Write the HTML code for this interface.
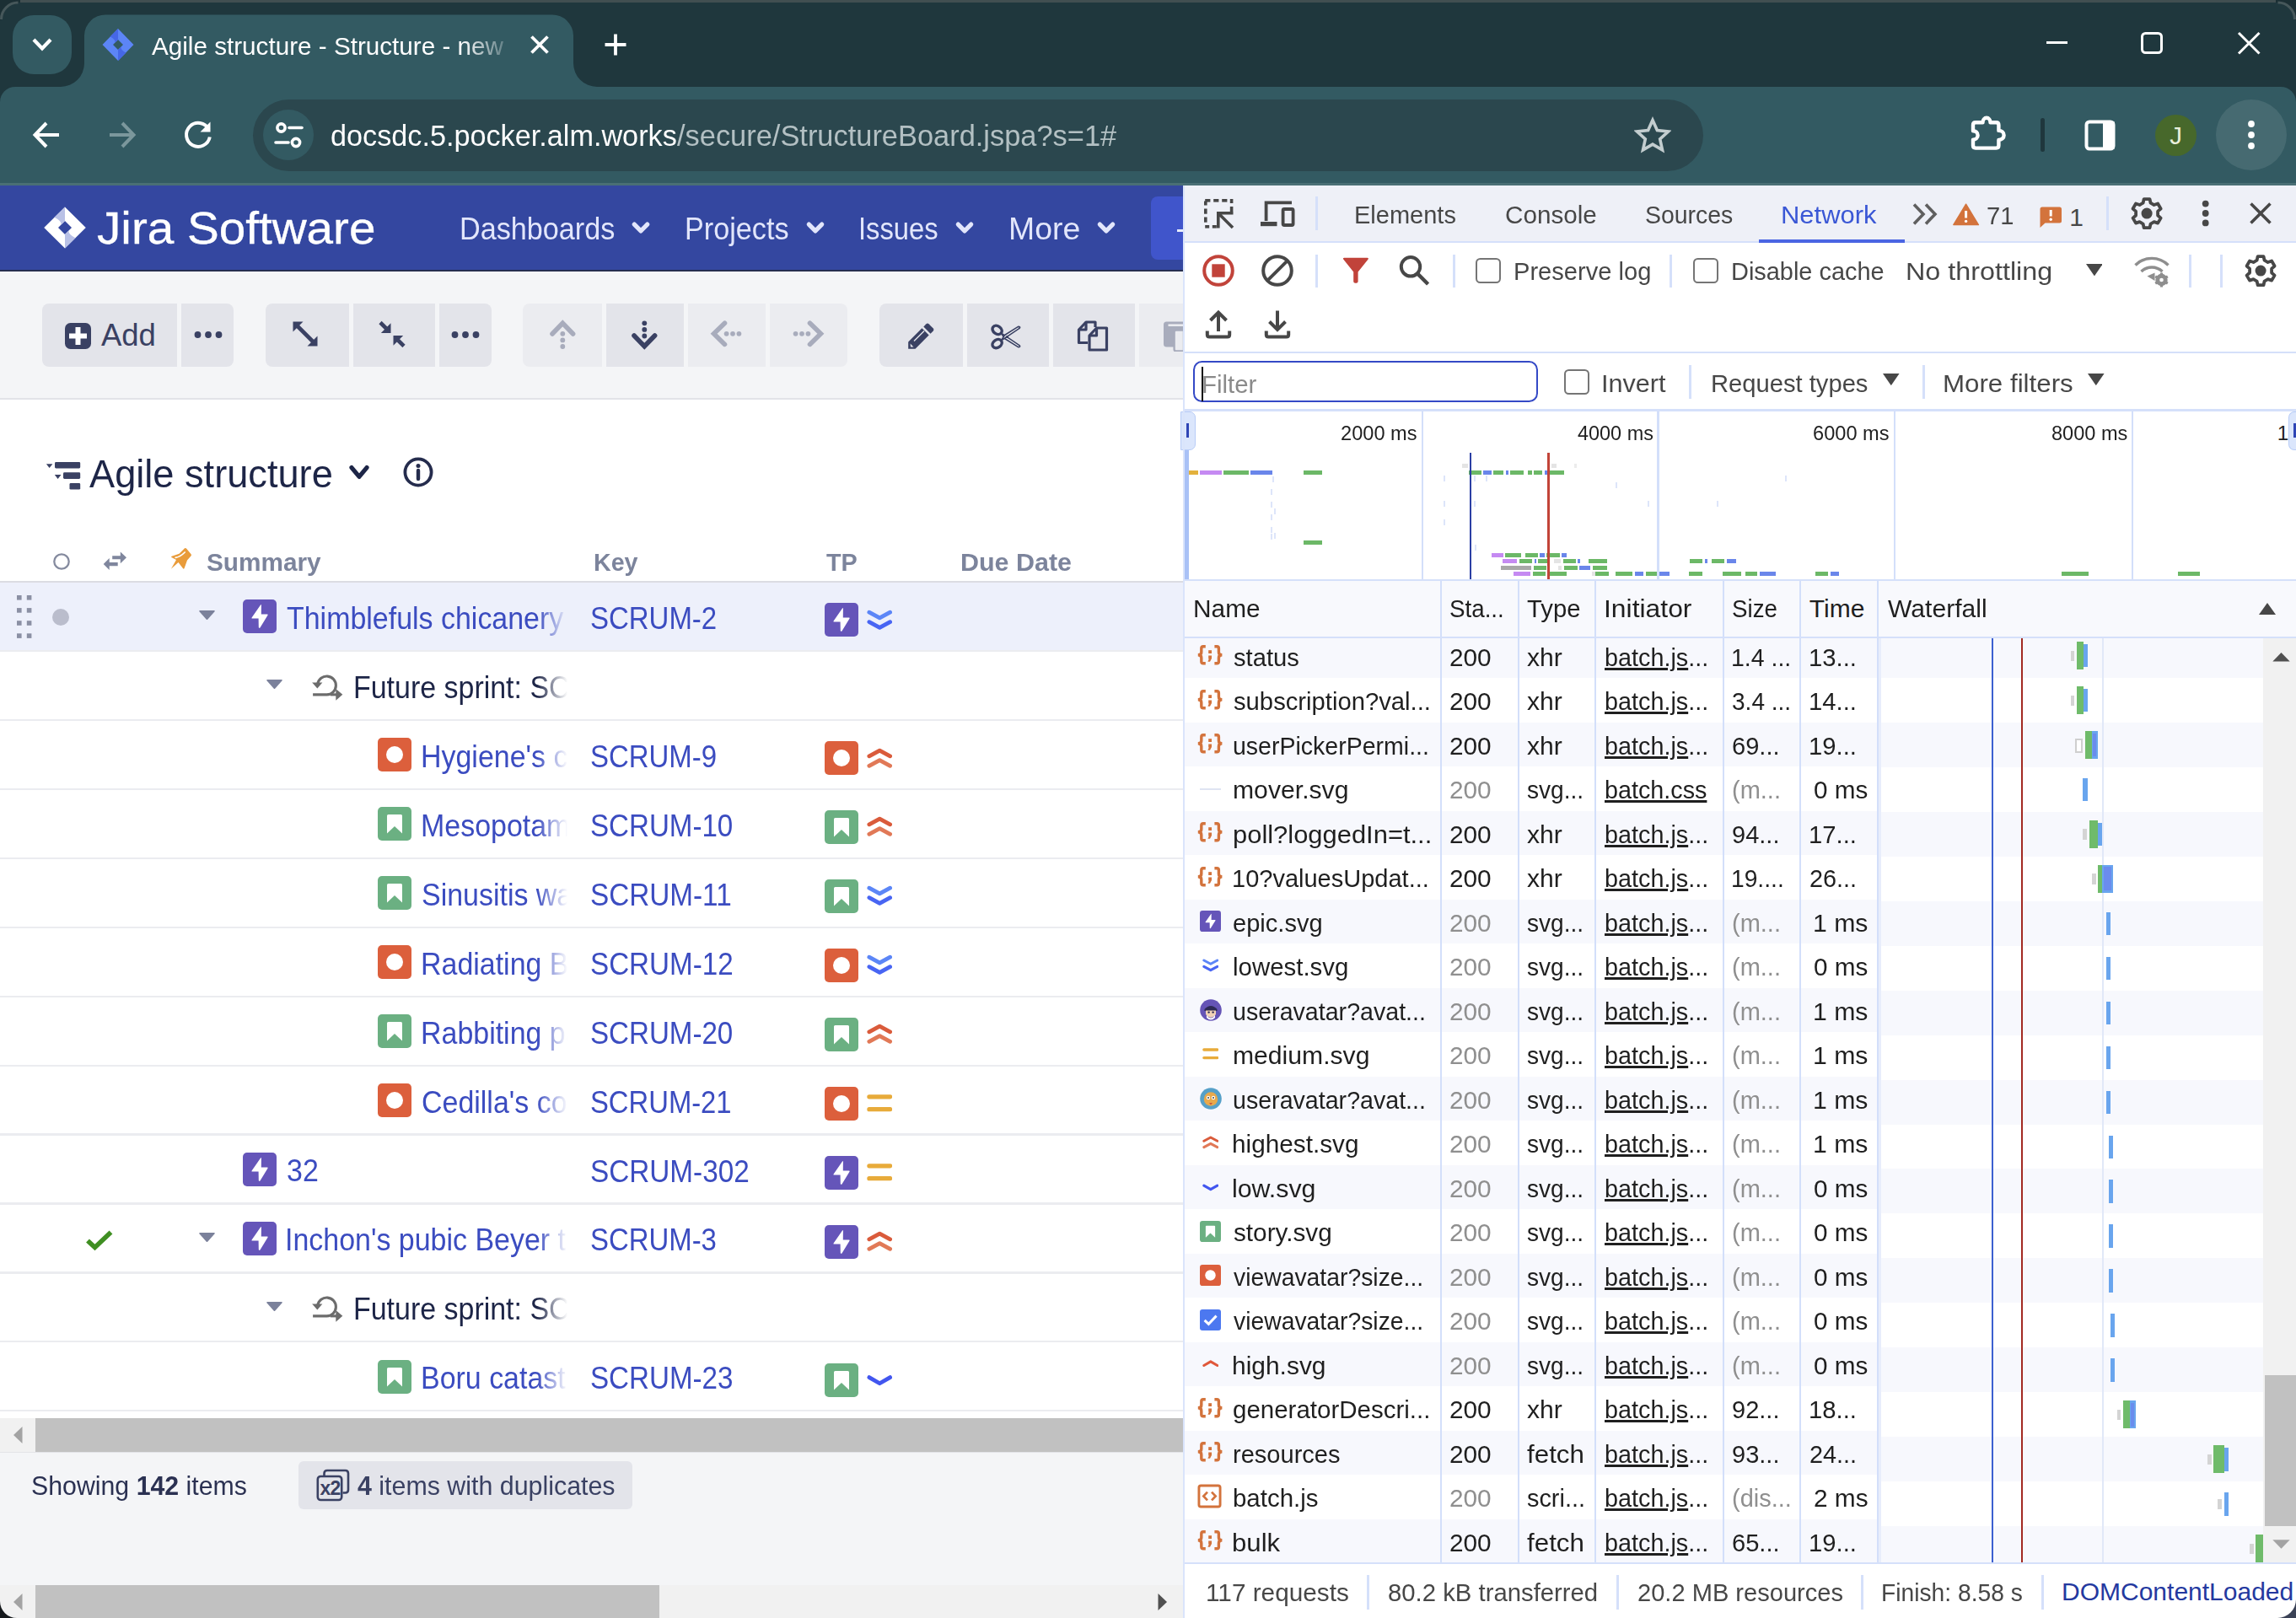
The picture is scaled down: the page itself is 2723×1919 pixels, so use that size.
<!DOCTYPE html>
<html lang="en"><head><meta charset="utf-8"><title>Agile structure - Structure - new</title>
<style>
html,body{margin:0;padding:0;}
html{width:2723px;height:1919px;overflow:hidden;}
body{width:2723px;height:1919px;overflow:hidden;position:relative;background:#fff;font-family:"Liberation Sans", sans-serif;}
.b{position:absolute;display:block;box-sizing:border-box;}
.t{position:absolute;display:block;white-space:nowrap;line-height:1;font-family:"Liberation Sans", sans-serif;transform-origin:0 0;}
.c{position:absolute;overflow:hidden;}

</style></head><body>
<div class="b" style="left:0px;top:0px;width:2723px;height:130px;background:#1f373d;"></div>
<div class="b" style="left:0px;top:0px;width:2723px;height:3px;background:#414f51;"></div>
<div class="b" style="left:0px;top:103px;width:2723px;height:117px;background:#335a62;border-radius:18px 18px 0 0;"></div>
<div class="b" style="left:0px;top:217.2px;width:2723px;height:2.4px;background:#4a6f75;"></div>
<svg class="b" style="left:0px;top:0px;" width="24" height="24" viewBox="0 0 24 24"><path d="M0 0 H24 V3 H20 A18.5 18.5 0 0 0 1.5 21.5 V24 H0 Z" fill="#1b2f34"/><path d="M1.5 23 A20 20 0 0 1 21.5 3" fill="none" stroke="#46575a" stroke-width="3"/></svg>
<svg class="b" style="left:2699px;top:0px;" width="24" height="24" viewBox="0 0 24 24"><path d="M24 0 H0 V3 H4 A18.5 18.5 0 0 1 22.5 21.5 V24 H24 Z" fill="#1b2f34"/><path d="M22.5 23 A20 20 0 0 0 2.5 3" fill="none" stroke="#46575a" stroke-width="3"/></svg>
<div class="b" style="left:15px;top:17.5px;width:70px;height:70.5px;background:#335a62;border-radius:25px;"></div>
<svg class="b" style="left:30px;top:32px;" width="40" height="40" viewBox="0 0 40 40"><polyline points="10,15 20,25.5 30,15" fill="none" stroke="#fff" stroke-width="4.2"/></svg>
<svg class="b" style="left:60px;top:17px;" width="680" height="87" viewBox="0 0 680 87"><path d="M12 86 A28 28 0 0 0 40 58 L40 25 A25 25 0 0 1 65 0.5 L595 0.5 A25 25 0 0 1 620 25 L620 58 A28 28 0 0 0 648 86 Z" fill="#335a62"/></svg>
<svg class="b" style="left:120px;top:33px;" width="40" height="40" viewBox="0 0 40 40"><path fill-rule="evenodd" d="M20 1 L38.5 20 L20 39 L1.5 20 Z M20 14 L14 20 L20 26 L26 20 Z" fill="#5c85f6"/><path d="M20 1 L10.5 10.5 Q17 13.5 16.5 17.5 L20 14 Z" fill="#4667e6"/><path d="M20 39 L29.5 29.5 Q23 26.5 23.5 22.5 L20 26 Z" fill="#4667e6"/></svg>
<span class="t" style="left:180.14px;top:40.11px;font-size:30px;color:#fff;transform:scaleX(0.9885);padding-bottom:12px;-webkit-mask-image:linear-gradient(90deg,#000 88%,rgba(0,0,0,.25) 100%);mask-image:linear-gradient(90deg,#000 88%,rgba(0,0,0,.25) 100%);">Agile structure - Structure - new</span>
<svg class="b" style="left:625px;top:38px;" width="30" height="30" viewBox="0 0 30 30"><path d="M5.5 5.5 L24.5 24.5 M24.5 5.5 L5.5 24.5" stroke="#fff" stroke-width="3.8" fill="none"/></svg>
<svg class="b" style="left:715px;top:38px;" width="30" height="30" viewBox="0 0 30 30"><path d="M15 2.5 V27.5 M2.5 15 H27.5" stroke="#fff" stroke-width="3.8" fill="none"/></svg>
<svg class="b" style="left:2420px;top:30px;" width="40" height="40" viewBox="0 0 40 40"><path d="M7 20.5 H32" stroke="#fff" stroke-width="3" fill="none"/></svg>
<svg class="b" style="left:2532px;top:31px;" width="40" height="40" viewBox="0 0 40 40"><rect x="8.5" y="8.5" width="23" height="23" rx="4" fill="none" stroke="#fff" stroke-width="3"/></svg>
<svg class="b" style="left:2647px;top:31px;" width="40" height="40" viewBox="0 0 40 40"><path d="M8 8 L32.5 32.5 M32.5 8 L8 32.5" stroke="#fff" stroke-width="3" fill="none"/></svg>
<svg class="b" style="left:35px;top:140px;" width="40" height="40" viewBox="0 0 40 40"><path d="M35 20 H7 M20 6 L6.5 20 L20 34" stroke="#fff" stroke-width="4" fill="none"/></svg>
<svg class="b" style="left:125px;top:140px;" width="40" height="40" viewBox="0 0 40 40"><path d="M5 20 H33 M20 6 L33.5 20 L20 34" stroke="#7b979c" stroke-width="4" fill="none"/></svg>
<svg class="b" style="left:215px;top:140px;" width="40" height="40" viewBox="0 0 40 40"><path d="M32.5 13.5 A14 14 0 1 0 33.8 22.5" stroke="#fff" stroke-width="4" fill="none"/><path d="M34.5 4.5 V16.5 H22.5 Z" fill="#fff"/></svg>
<div class="b" style="left:300px;top:118px;width:1720px;height:85px;background:#2b474e;border-radius:42.5px;"></div>
<div class="b" style="left:312px;top:130px;width:60px;height:60px;background:#335a62;border-radius:30px;"></div>
<svg class="b" style="left:322px;top:140px;" width="40" height="40" viewBox="0 0 40 40"><g fill="none" stroke="#fff" stroke-width="3.6"><circle cx="11.5" cy="11.5" r="4.6"/><path d="M21 11.5 H36" stroke-linecap="round"/><circle cx="29" cy="29" r="4.6"/><path d="M5 29 H20" stroke-linecap="round"/></g></svg>
<span class="t" style="left:392.46px;top:143.55px;font-size:35.5px;color:#fff;transform:scaleX(0.9638);">docsdc.5.pocker.alm.works</span>
<span class="t" style="left:802.50px;top:143.55px;font-size:35.5px;color:#b3c0c3;transform:scaleX(0.9692);">/secure/StructureBoard.jspa?s=1#</span>
<svg class="b" style="left:1938px;top:138px;" width="44" height="44" viewBox="0 0 44 44"><path d="M22 4.5 L27.4 16.6 L40.5 18 L30.7 26.9 L33.5 39.8 L22 33.2 L10.5 39.8 L13.3 26.9 L3.5 18 L16.6 16.6 Z" fill="none" stroke="#c3cdcf" stroke-width="3.6" stroke-linejoin="miter"/></svg>
<svg class="b" style="left:2334px;top:134px;" width="48" height="48" viewBox="0 0 48 48"><path d="M9 11.2 H17.5 A4.5 5.4 0 0 1 26.5 11.2 H33.4 Q36.4 11.2 36.4 14.2 V20.9 A6.2 5.5 0 0 1 36.4 31.9 V38.6 Q36.4 41.6 33.4 41.6 H9 Q6 41.6 6 38.6 V31.6 A5.6 5.2 0 0 0 6 21.2 V14.2 Q6 11.2 9 11.2 Z" fill="none" stroke="#fff" stroke-width="4.4" stroke-linejoin="round"/></svg>
<div class="b" style="left:2419.5px;top:140px;width:5px;height:39.5px;background:#1f373d;border-radius:2.5px;"></div>
<svg class="b" style="left:2470px;top:140px;" width="42" height="42" viewBox="0 0 42 42"><rect x="4.5" y="4.5" width="32" height="32" rx="3.5" fill="none" stroke="#fff" stroke-width="4"/><rect x="24" y="4" width="13.5" height="33" fill="#fff"/></svg>
<div class="b" style="left:2555.5px;top:135.5px;width:49px;height:49px;background:#47682b;border-radius:25px;"></div>
<span class="t" style="left:2573.34px;top:146.23px;font-size:29.5px;color:#e9efdc;">J</span>
<div class="b" style="left:2628px;top:118px;width:84px;height:84px;background:#466a71;border-radius:42px;"></div>
<svg class="b" style="left:2660px;top:138px;" width="20" height="44" viewBox="0 0 20 44"><g fill="#fff"><circle cx="10" cy="9" r="3.9"/><circle cx="10" cy="22" r="3.9"/><circle cx="10" cy="35" r="3.9"/></g></svg>
<div class="b" style="left:0px;top:219.5px;width:1403px;height:1699.5px;background:#fff;"></div>
<div class="b" style="left:0px;top:219.5px;width:1403px;height:101px;background:#3447a0;"></div>
<div class="b" style="left:0px;top:319.8px;width:1403px;height:2px;background:#262e4f;"></div>
<svg class="b" style="left:51px;top:245px;" width="52" height="50" viewBox="0 0 52 50"><defs><linearGradient id="jg1" x1="0" y1="0" x2="1" y2="1"><stop offset="0" stop-color="#fff" stop-opacity=".55"/><stop offset="1" stop-color="#fff"/></linearGradient><linearGradient id="jg2" x1="1" y1="1" x2="0" y2="0"><stop offset="0" stop-color="#fff" stop-opacity=".55"/><stop offset="1" stop-color="#fff"/></linearGradient></defs><path fill-rule="evenodd" d="M26 0.5 L50.8 25 L26 49.5 L1.2 25 Z M26 17 L18 25 L26 33 L34 25 Z" fill="#fff"/><path d="M26 0.5 L13.5 12.8 Q22 17 21.5 21.5 L26 17 Z" fill="#b9c1e6"/><path d="M26 49.5 L38.5 37.2 Q30 33 30.5 28.5 L26 33 Z" fill="#b9c1e6"/></svg>
<span class="t" style="left:115.12px;top:244.01px;font-size:53.5px;color:#fff;transform:scaleX(1.0583);-webkit-text-stroke:0.35px #fff;">Jira Software</span>
<span class="t" style="left:544.50px;top:254.40px;font-size:36.5px;color:#e2e6fb;transform:scaleX(0.9366);">Dashboards</span>
<svg class="b" style="left:743.8px;top:258px;" width="32" height="24" viewBox="0 0 32 24"><polyline points="8.3,8.1 16,15.9 23.7,8.1" fill="none" stroke="#e2e6fb" stroke-width="5.2" stroke-linecap="round" stroke-linejoin="round"/></svg>
<span class="t" style="left:812.19px;top:254.40px;font-size:36.5px;color:#e2e6fb;transform:scaleX(0.9369);">Projects</span>
<svg class="b" style="left:950.5px;top:258px;" width="32" height="24" viewBox="0 0 32 24"><polyline points="8.3,8.1 16,15.9 23.7,8.1" fill="none" stroke="#e2e6fb" stroke-width="5.2" stroke-linecap="round" stroke-linejoin="round"/></svg>
<span class="t" style="left:1017.98px;top:254.40px;font-size:36.5px;color:#e2e6fb;transform:scaleX(0.8977);">Issues</span>
<svg class="b" style="left:1127.5px;top:258px;" width="32" height="24" viewBox="0 0 32 24"><polyline points="8.3,8.1 16,15.9 23.7,8.1" fill="none" stroke="#e2e6fb" stroke-width="5.2" stroke-linecap="round" stroke-linejoin="round"/></svg>
<span class="t" style="left:1195.93px;top:254.40px;font-size:36.5px;color:#e2e6fb;transform:scaleX(1.0247);">More</span>
<svg class="b" style="left:1295.5px;top:258px;" width="32" height="24" viewBox="0 0 32 24"><polyline points="8.3,8.1 16,15.9 23.7,8.1" fill="none" stroke="#e2e6fb" stroke-width="5.2" stroke-linecap="round" stroke-linejoin="round"/></svg>
<div class="b" style="left:1365px;top:232.5px;width:60px;height:75.5px;background:#4055cb;border-radius:8px;clip-path:inset(0 22px 0 0);"></div>
<div class="b" style="left:1395.8px;top:272.1px;width:7.2px;height:3px;background:#e8ecfb;"></div>
<div class="b" style="left:0px;top:321.5px;width:1403px;height:151px;background:#f4f5f7;"></div>
<div class="b" style="left:0px;top:471.8px;width:1403px;height:2.2px;background:#e2e3e8;"></div>
<div class="b" style="left:50px;top:360px;width:160px;height:74.8px;background:#e3e4ea;border-radius:8px 0 0 8px;"></div>
<div class="b" style="left:215px;top:360px;width:62px;height:74.8px;background:#e3e4ea;border-radius:0 8px 8px 0;"></div>
<svg class="b" style="left:76.5px;top:383px;" width="31" height="31" viewBox="0 0 31 31"><rect width="31" height="31" rx="6.5" fill="#3a4163"/><path d="M15.5 5 V26 M5 15.5 H26" stroke="#fff" stroke-width="6"/></svg>
<span class="t" style="left:119.93px;top:379.90px;font-size:36.5px;color:#3a4163;">Add</span>
<svg class="b" style="left:226.5px;top:376.5px;" width="40" height="40" viewBox="0 0 40 40"><g fill="#3a4163"><circle cx="7.5" cy="20" r="3.9"/><circle cx="20" cy="20" r="3.9"/><circle cx="32.5" cy="20" r="3.9"/></g></svg>
<div class="b" style="left:315px;top:360px;width:99px;height:74.8px;background:#e3e4ea;border-radius:8px 0 0 8px;"></div>
<div class="b" style="left:419px;top:360px;width:97px;height:74.8px;background:#e3e4ea;border-radius:0;"></div>
<div class="b" style="left:521px;top:360px;width:62px;height:74.8px;background:#e3e4ea;border-radius:0 8px 8px 0;"></div>
<svg class="b" style="left:346px;top:380px;" width="32" height="32" viewBox="0 0 32 32"><g fill="#3a4163" stroke="#3a4163"><path d="M7 7 L25 25" stroke-width="4.6" fill="none"/><path d="M1.5 1.5 H13.5 L1.5 13.5 Z" stroke="none"/><path d="M30.5 30.5 H18.5 L30.5 18.5 Z" stroke="none"/></g></svg>
<svg class="b" style="left:449px;top:380px;" width="32" height="32" viewBox="0 0 32 32"><g fill="#3a4163" stroke="#3a4163"><path d="M2 2.5 L9 9.5 M30 30.5 L23 23.5" stroke-width="4.6" fill="none"/><path d="M14.5 15 H2.8 L14.5 3.3 Z" stroke="none"/><path d="M17.5 18 H29.2 L17.5 29.7 Z" stroke="none"/></g></svg>
<svg class="b" style="left:531.5px;top:376.5px;" width="40" height="40" viewBox="0 0 40 40"><g fill="#3a4163"><circle cx="7.5" cy="20" r="3.9"/><circle cx="20" cy="20" r="3.9"/><circle cx="32.5" cy="20" r="3.9"/></g></svg>
<div class="b" style="left:620px;top:360px;width:94px;height:74.8px;background:#ebecf0;border-radius:8px 0 0 8px;"></div>
<div class="b" style="left:719px;top:360px;width:92px;height:74.8px;background:#e3e4ea;border-radius:0;"></div>
<div class="b" style="left:816px;top:360px;width:92px;height:74.8px;background:#ebecf0;border-radius:0;"></div>
<div class="b" style="left:913px;top:360px;width:92px;height:74.8px;background:#ebecf0;border-radius:0 8px 8px 0;"></div>
<svg class="b" style="left:647px;top:376px;" width="40" height="40" viewBox="0 0 40 40"><path d="M8 20 L20.3 7.2 L32.6 20" fill="none" stroke="#a8acbc" stroke-width="5.6" stroke-linecap="round" stroke-linejoin="miter"/><g fill="#a8acbc"><circle cx="20.3" cy="19.8" r="2.9"/><circle cx="20.3" cy="27.4" r="2.9"/><circle cx="20.3" cy="35" r="2.9"/></g></svg>
<svg class="b" style="left:744px;top:376px;" width="40" height="40" viewBox="0 0 40 40"><path d="M8 22 L20.3 34.8 L32.6 22" fill="none" stroke="#3a4163" stroke-width="5.6" stroke-linecap="round" stroke-linejoin="miter"/><g fill="#3a4163"><circle cx="20.3" cy="7.3" r="2.9"/><circle cx="20.3" cy="14.9" r="2.9"/><circle cx="20.3" cy="22.5" r="2.9"/></g></svg>
<svg class="b" style="left:840px;top:376px;" width="40" height="40" viewBox="0 0 40 40"><path d="M19.5 7.2 L6.6 19.8 L19.5 32.4" fill="none" stroke="#a8acbc" stroke-width="5.6" stroke-linecap="round" stroke-linejoin="miter"/><g fill="#a8acbc"><circle cx="21.6" cy="19.8" r="2.9"/><circle cx="29" cy="19.8" r="2.9"/><circle cx="36.4" cy="19.8" r="2.9"/></g></svg>
<svg class="b" style="left:940px;top:376px;" width="40" height="40" viewBox="0 0 40 40"><path d="M20.5 7.2 L33.4 19.8 L20.5 32.4" fill="none" stroke="#a8acbc" stroke-width="5.6" stroke-linecap="round" stroke-linejoin="miter"/><g fill="#a8acbc"><circle cx="18.4" cy="19.8" r="2.9"/><circle cx="11" cy="19.8" r="2.9"/><circle cx="3.6" cy="19.8" r="2.9"/></g></svg>
<div class="b" style="left:1043px;top:360px;width:99px;height:74.8px;background:#e3e4ea;border-radius:8px 0 0 8px;"></div>
<div class="b" style="left:1147px;top:360px;width:97px;height:74.8px;background:#e3e4ea;border-radius:0;"></div>
<div class="b" style="left:1249px;top:360px;width:97px;height:74.8px;background:#e3e4ea;border-radius:0;"></div>
<div class="b" style="left:1351px;top:360px;width:52px;height:74.8px;background:#ebecf0;border-radius:0;"></div>
<svg class="b" style="left:1076px;top:382px;" width="33" height="33" viewBox="0 0 33 33"><g fill="#3a4163"><path d="M22.5 2.2 Q24 0.8 25.5 2.2 L30.8 7.5 Q32.2 9 30.8 10.5 L27.6 13.7 L19.3 5.4 Z"/><path d="M17.4 7.3 L25.7 15.6 L9.5 31.8 H1.2 V23.5 Z"/></g><path d="M3.6 25.5 L7.5 29.4 L4 29.6 Z" fill="#e3e4ea"/><path d="M8 22.5 L20 10.5" stroke="#e3e4ea" stroke-width="1.4"/></svg>
<svg class="b" style="left:1175px;top:384px;" width="38" height="31" viewBox="0 0 38 31"><g fill="none" stroke="#3a4163" stroke-width="3.4"><ellipse cx="7.6" cy="7.4" rx="6" ry="4.6" transform="rotate(35 7.6 7.4)"/><ellipse cx="7.6" cy="23.6" rx="6" ry="4.6" transform="rotate(-35 7.6 23.6)"/></g><g fill="#f4f5f7" stroke="#3a4163" stroke-width="1.6" stroke-linejoin="round"><path d="M12.5 11.2 L34 25.6 Q35.8 27.4 32.6 27.6 L16.5 17.5 Z"/><path d="M12.5 19.8 L34 5.4 Q35.8 3.6 32.6 3.4 L16.5 13.5 Z"/></g><circle cx="19.3" cy="15.5" r="1.6" fill="#3a4163"/></svg>
<svg class="b" style="left:1277px;top:380px;" width="38" height="37" viewBox="0 0 38 37"><g fill="none" stroke="#3a4163" stroke-width="3.2" stroke-linejoin="round"><path d="M13 26.5 H2.5 V11 L11 2 H22 V8"/><path d="M2.5 11 H11 V2"/><path d="M15 35 V18 L23.5 9 H35.5 V35 Z" fill="#e3e4ea"/><path d="M15 18 H23.5 V9"/></g></svg>
<svg class="b" style="left:1380px;top:380.5px;" width="24" height="36" viewBox="0 0 24 36"><path d="M0 4 Q0 0.5 3.5 0.5 H24 V30.5 H3.5 Q0 30.5 0 27 Z" fill="#a8acbc"/><rect x="5.5" y="3.4" width="19" height="2.6" fill="#ebecf0"/><path d="M14.8 10.5 H24 V35.5 H14.8 Q12.6 35.5 12.6 33.3 V12.7 Q12.6 10.5 14.8 10.5 Z" fill="#ebecf0" stroke="#a8acbc" stroke-width="2.4"/></svg>
<svg class="b" style="left:54px;top:546px;" width="42" height="36" viewBox="0 0 42 36"><g fill="#3a4163"><rect x="11" y="2" width="30.2" height="7.5" rx="1.4"/><rect x="21" y="14.3" width="20.2" height="7.6" rx="1.4"/><rect x="28.5" y="27.1" width="12.7" height="7.5" rx="1.4"/><path d="M0.9 4.2 H8.4 L4.6 9 Z"/><path d="M10.8 17.1 H18.5 L14.6 21.9 Z"/></g></svg>
<span class="t" style="left:105.81px;top:538.86px;font-size:46px;color:#1d2547;transform:scaleX(0.9822);">Agile structure</span>
<svg class="b" style="left:410px;top:548px;" width="32" height="24" viewBox="0 0 32 24"><polyline points="7,6.6 16,17.4 25,6.6" fill="none" stroke="#1d2547" stroke-width="5.2" stroke-linecap="round" stroke-linejoin="round"/></svg>
<svg class="b" style="left:476px;top:540px;" width="40" height="40" viewBox="0 0 40 40"><circle cx="20" cy="20" r="15.6" fill="none" stroke="#252c4d" stroke-width="3.8"/><circle cx="20" cy="12.6" r="2.5" fill="#252c4d"/><path d="M20 18 V28" stroke="#252c4d" stroke-width="4.4" stroke-linecap="round"/></svg>
<svg class="b" style="left:60.5px;top:654.4px;" width="24" height="24" viewBox="0 0 24 24"><circle cx="12" cy="12" r="8.7" fill="none" stroke="#858b9f" stroke-width="2.3"/></svg>
<svg class="b" style="left:122px;top:654px;" width="30" height="24" viewBox="0 0 30 24"><g fill="#7f869d"><path d="M11.2 5.2 H20.8 V0.4 L28 7.2 L20.8 14.3 V9.3 H11.2 Z"/><path d="M17.7 13 H7.7 V8 L0.7 15 L7.7 22.1 V17.2 H17.7 Z"/></g></svg>
<svg class="b" style="left:201px;top:649px;" width="29" height="28" viewBox="0 0 29 28"><path d="M18 1.3 Q19 0.6 20 1.6 L25.6 8.2 Q26.4 9.3 25.6 10.2 L21 15.5 L17.6 25 Q16.8 26.4 15.9 25 L10.5 18 L1.9 25.8 L8 15 L2.4 12 Q1.6 11.2 2.6 10.8 L11.5 7.8 Z" fill="#e99c3b"/><path d="M7.2 12.4 Q13 11.3 18.2 6" stroke="#fff" stroke-width="1.7" fill="none" stroke-linecap="round"/></svg>
<span class="t" style="left:245.04px;top:651.61px;font-size:30px;color:#7c849c;font-weight:700;transform:scaleX(0.9918);">Summary</span>
<span class="t" style="left:704.08px;top:651.61px;font-size:30px;color:#7c849c;font-weight:700;transform:scaleX(0.9550);">Key</span>
<span class="t" style="left:979.68px;top:651.61px;font-size:30px;color:#7c849c;font-weight:700;transform:scaleX(0.9599);">TP</span>
<span class="t" style="left:1139.46px;top:651.61px;font-size:30px;color:#7c849c;font-weight:700;transform:scaleX(1.0156);">Due Date</span>
<div class="b" style="left:0px;top:688.6px;width:1403px;height:2.4px;background:#dbdce2;"></div>
<div class="b" style="left:0px;top:690.6px;width:1403px;height:81.9px;background:#edf0fb;"></div>
<div class="b" style="left:0px;top:770.8px;width:1403px;height:2.2px;background:#ebecf0;"></div>
<svg class="b" style="left:288px;top:711.4px;" width="40" height="40" viewBox="0 0 40 40"><rect width="40" height="40" rx="5" fill="#6555b9"/><path d="M21.2 6.2 L10.6 21.4 Q10 22.6 11.4 22.6 L18.6 22.6 L18.8 33 Q19.4 34.6 20.6 33.2 L29.6 18.6 Q30 17.4 28.8 17.4 L21.8 17.4 L21.9 7 Q21.9 5.6 21.2 6.2 Z" fill="#fff"/></svg>
<svg class="b" style="left:234.8px;top:723.2px;" width="21" height="13" viewBox="0 0 21 13"><path d="M2.2 1 H18.8 Q20.6 1 19.4 2.6 L11.4 11.6 Q10.5 12.6 9.6 11.6 L1.6 2.6 Q0.4 1 2.2 1 Z" fill="#7b819b"/></svg>
<div class="c" style="left:340px;top:704.6px;width:333px;height:60px;-webkit-mask-image:linear-gradient(90deg,#000 89.2%,transparent 100%);mask-image:linear-gradient(90deg,#000 89.2%,transparent 100%);">
<span class="t" style="left:0.24px;top:11.30px;font-size:36.5px;color:#3b4cc0;transform:scaleX(0.9300);">Thimblefuls chicanery t</span>
</div>
<span class="t" style="left:700.00px;top:715.90px;font-size:36.5px;color:#3b4cc0;transform:scaleX(0.9029);">SCRUM-2</span>
<svg class="b" style="left:978px;top:715.2px;" width="40" height="40" viewBox="0 0 40 40"><rect width="40" height="40" rx="5" fill="#6555b9"/><path d="M21.2 6.2 L10.6 21.4 Q10 22.6 11.4 22.6 L18.6 22.6 L18.8 33 Q19.4 34.6 20.6 33.2 L29.6 18.6 Q30 17.4 28.8 17.4 L21.8 17.4 L21.9 7 Q21.9 5.6 21.2 6.2 Z" fill="#fff"/></svg>
<svg class="b" style="left:1027.8px;top:719.6px;" width="30.5" height="30.5" viewBox="0 0 32 32"><path d="M3 6.5 L16 13.5 L29 6.5" stroke="#5c86f7" stroke-width="5" fill="none" stroke-linecap="round" stroke-linejoin="round"/><path d="M3 18.5 L16 25.5 L29 18.5" stroke="#4865f3" stroke-width="5" fill="none" stroke-linecap="round" stroke-linejoin="round"/></svg>
<div class="b" style="left:0px;top:852.75px;width:1403px;height:2.2px;background:#ebecf0;"></div>
<svg class="b" style="left:314.6px;top:805.15px;" width="21" height="13" viewBox="0 0 21 13"><path d="M2.2 1 H18.8 Q20.6 1 19.4 2.6 L11.4 11.6 Q10.5 12.6 9.6 11.6 L1.6 2.6 Q0.4 1 2.2 1 Z" fill="#7b819b"/></svg>
<svg class="b" style="left:368px;top:799.55px;" width="40" height="31" viewBox="0 0 40 33"><g fill="none" stroke="#6c6c6c" stroke-width="3.3"><path d="M8 12 A11.6 11.6 0 1 1 19.6 25.4 H2"/><path d="M24 25.4 H33"/></g><path d="M1 10.2 H14 L7.6 17.6 Z" fill="#6c6c6c"/><path d="M31 18 L39.5 25.4 L31 32.8 Z" fill="#6c6c6c"/></svg>
<div class="c" style="left:421px;top:786.55px;width:252px;height:60px;-webkit-mask-image:linear-gradient(90deg,#000 85.7%,transparent 100%);mask-image:linear-gradient(90deg,#000 85.7%,transparent 100%);">
<span class="t" style="left:-1.78px;top:11.30px;font-size:36.5px;color:#1d2547;transform:scaleX(0.9300);">Future sprint: SCRUM</span>
</div>
<div class="b" style="left:0px;top:934.7px;width:1403px;height:2.2px;background:#ebecf0;"></div>
<svg class="b" style="left:448px;top:875.3px;" width="40" height="40" viewBox="0 0 40 40"><rect width="40" height="40" rx="5" fill="#dc5f3c"/><circle cx="20" cy="20" r="10" fill="#fff"/></svg>
<div class="c" style="left:500.5px;top:868.5px;width:172.5px;height:60px;-webkit-mask-image:linear-gradient(90deg,#000 79.0%,transparent 100%);mask-image:linear-gradient(90deg,#000 79.0%,transparent 100%);">
<span class="t" style="left:-1.78px;top:11.30px;font-size:36.5px;color:#3b4cc0;transform:scaleX(0.9300);">Hygiene&#x27;s canard</span>
</div>
<span class="t" style="left:700.00px;top:879.80px;font-size:36.5px;color:#3b4cc0;transform:scaleX(0.9023);">SCRUM-9</span>
<svg class="b" style="left:978px;top:879.1px;" width="40" height="40" viewBox="0 0 40 40"><rect width="40" height="40" rx="5" fill="#dc5f3c"/><circle cx="20" cy="20" r="10" fill="#fff"/></svg>
<svg class="b" style="left:1027.8px;top:883.5px;" width="30.5" height="30.5" viewBox="0 0 32 32"><path d="M3 13.5 L16 6.5 L29 13.5" stroke="#da5b3b" stroke-width="5" fill="none" stroke-linecap="round" stroke-linejoin="round"/><path d="M3 25.5 L16 18.5 L29 25.5" stroke="#e17957" stroke-width="5" fill="none" stroke-linecap="round" stroke-linejoin="round"/></svg>
<div class="b" style="left:0px;top:1016.65px;width:1403px;height:2.2px;background:#ebecf0;"></div>
<svg class="b" style="left:448px;top:957.25px;" width="40" height="40" viewBox="0 0 40 40"><rect width="40" height="40" rx="5" fill="#6bb082"/><path d="M12.5 9 H27.5 Q29 9 29 10.5 V31.5 L20 23 L11 31.5 V10.5 Q11 9 12.5 9 Z" fill="#fff"/></svg>
<div class="c" style="left:500.5px;top:950.45px;width:172.5px;height:60px;-webkit-mask-image:linear-gradient(90deg,#000 79.0%,transparent 100%);mask-image:linear-gradient(90deg,#000 79.0%,transparent 100%);">
<span class="t" style="left:-1.78px;top:11.30px;font-size:36.5px;color:#3b4cc0;transform:scaleX(0.9300);">Mesopotamia</span>
</div>
<span class="t" style="left:700.00px;top:961.75px;font-size:36.5px;color:#3b4cc0;transform:scaleX(0.9073);">SCRUM-10</span>
<svg class="b" style="left:978px;top:961.05px;" width="40" height="40" viewBox="0 0 40 40"><rect width="40" height="40" rx="5" fill="#6bb082"/><path d="M12.5 9 H27.5 Q29 9 29 10.5 V31.5 L20 23 L11 31.5 V10.5 Q11 9 12.5 9 Z" fill="#fff"/></svg>
<svg class="b" style="left:1027.8px;top:965.45px;" width="30.5" height="30.5" viewBox="0 0 32 32"><path d="M3 13.5 L16 6.5 L29 13.5" stroke="#da5b3b" stroke-width="5" fill="none" stroke-linecap="round" stroke-linejoin="round"/><path d="M3 25.5 L16 18.5 L29 25.5" stroke="#e17957" stroke-width="5" fill="none" stroke-linecap="round" stroke-linejoin="round"/></svg>
<div class="b" style="left:0px;top:1098.6px;width:1403px;height:2.2px;background:#ebecf0;"></div>
<svg class="b" style="left:448px;top:1039.2px;" width="40" height="40" viewBox="0 0 40 40"><rect width="40" height="40" rx="5" fill="#6bb082"/><path d="M12.5 9 H27.5 Q29 9 29 10.5 V31.5 L20 23 L11 31.5 V10.5 Q11 9 12.5 9 Z" fill="#fff"/></svg>
<div class="c" style="left:500.5px;top:1032.4px;width:172.5px;height:60px;-webkit-mask-image:linear-gradient(90deg,#000 79.0%,transparent 100%);mask-image:linear-gradient(90deg,#000 79.0%,transparent 100%);">
<span class="t" style="left:-0.54px;top:11.30px;font-size:36.5px;color:#3b4cc0;transform:scaleX(0.9300);">Sinusitis wand</span>
</div>
<span class="t" style="left:699.99px;top:1043.70px;font-size:36.5px;color:#3b4cc0;transform:scaleX(0.9117);">SCRUM-11</span>
<svg class="b" style="left:978px;top:1043px;" width="40" height="40" viewBox="0 0 40 40"><rect width="40" height="40" rx="5" fill="#6bb082"/><path d="M12.5 9 H27.5 Q29 9 29 10.5 V31.5 L20 23 L11 31.5 V10.5 Q11 9 12.5 9 Z" fill="#fff"/></svg>
<svg class="b" style="left:1027.8px;top:1047.4px;" width="30.5" height="30.5" viewBox="0 0 32 32"><path d="M3 6.5 L16 13.5 L29 6.5" stroke="#5c86f7" stroke-width="5" fill="none" stroke-linecap="round" stroke-linejoin="round"/><path d="M3 18.5 L16 25.5 L29 18.5" stroke="#4865f3" stroke-width="5" fill="none" stroke-linecap="round" stroke-linejoin="round"/></svg>
<div class="b" style="left:0px;top:1180.55px;width:1403px;height:2.2px;background:#ebecf0;"></div>
<svg class="b" style="left:448px;top:1121.15px;" width="40" height="40" viewBox="0 0 40 40"><rect width="40" height="40" rx="5" fill="#dc5f3c"/><circle cx="20" cy="20" r="10" fill="#fff"/></svg>
<div class="c" style="left:500.5px;top:1114.35px;width:172.5px;height:60px;-webkit-mask-image:linear-gradient(90deg,#000 79.0%,transparent 100%);mask-image:linear-gradient(90deg,#000 79.0%,transparent 100%);">
<span class="t" style="left:-1.78px;top:11.30px;font-size:36.5px;color:#3b4cc0;transform:scaleX(0.9300);">Radiating Bo</span>
</div>
<span class="t" style="left:699.99px;top:1125.65px;font-size:36.5px;color:#3b4cc0;transform:scaleX(0.9093);">SCRUM-12</span>
<svg class="b" style="left:978px;top:1124.95px;" width="40" height="40" viewBox="0 0 40 40"><rect width="40" height="40" rx="5" fill="#dc5f3c"/><circle cx="20" cy="20" r="10" fill="#fff"/></svg>
<svg class="b" style="left:1027.8px;top:1129.35px;" width="30.5" height="30.5" viewBox="0 0 32 32"><path d="M3 6.5 L16 13.5 L29 6.5" stroke="#5c86f7" stroke-width="5" fill="none" stroke-linecap="round" stroke-linejoin="round"/><path d="M3 18.5 L16 25.5 L29 18.5" stroke="#4865f3" stroke-width="5" fill="none" stroke-linecap="round" stroke-linejoin="round"/></svg>
<div class="b" style="left:0px;top:1262.5px;width:1403px;height:2.2px;background:#ebecf0;"></div>
<svg class="b" style="left:448px;top:1203.1px;" width="40" height="40" viewBox="0 0 40 40"><rect width="40" height="40" rx="5" fill="#6bb082"/><path d="M12.5 9 H27.5 Q29 9 29 10.5 V31.5 L20 23 L11 31.5 V10.5 Q11 9 12.5 9 Z" fill="#fff"/></svg>
<div class="c" style="left:500.5px;top:1196.3px;width:172.5px;height:60px;-webkit-mask-image:linear-gradient(90deg,#000 79.0%,transparent 100%);mask-image:linear-gradient(90deg,#000 79.0%,transparent 100%);">
<span class="t" style="left:-1.78px;top:11.30px;font-size:36.5px;color:#3b4cc0;transform:scaleX(0.9300);">Rabbiting pa</span>
</div>
<span class="t" style="left:700.00px;top:1207.60px;font-size:36.5px;color:#3b4cc0;transform:scaleX(0.9073);">SCRUM-20</span>
<svg class="b" style="left:978px;top:1206.9px;" width="40" height="40" viewBox="0 0 40 40"><rect width="40" height="40" rx="5" fill="#6bb082"/><path d="M12.5 9 H27.5 Q29 9 29 10.5 V31.5 L20 23 L11 31.5 V10.5 Q11 9 12.5 9 Z" fill="#fff"/></svg>
<svg class="b" style="left:1027.8px;top:1211.3px;" width="30.5" height="30.5" viewBox="0 0 32 32"><path d="M3 13.5 L16 6.5 L29 13.5" stroke="#da5b3b" stroke-width="5" fill="none" stroke-linecap="round" stroke-linejoin="round"/><path d="M3 25.5 L16 18.5 L29 25.5" stroke="#e17957" stroke-width="5" fill="none" stroke-linecap="round" stroke-linejoin="round"/></svg>
<div class="b" style="left:0px;top:1344.45px;width:1403px;height:2.2px;background:#ebecf0;"></div>
<svg class="b" style="left:448px;top:1285.05px;" width="40" height="40" viewBox="0 0 40 40"><rect width="40" height="40" rx="5" fill="#dc5f3c"/><circle cx="20" cy="20" r="10" fill="#fff"/></svg>
<div class="c" style="left:500.5px;top:1278.25px;width:172.5px;height:60px;-webkit-mask-image:linear-gradient(90deg,#000 79.0%,transparent 100%);mask-image:linear-gradient(90deg,#000 79.0%,transparent 100%);">
<span class="t" style="left:-0.72px;top:11.30px;font-size:36.5px;color:#3b4cc0;transform:scaleX(0.9300);">Cedilla&#x27;s comb</span>
</div>
<span class="t" style="left:700.01px;top:1289.55px;font-size:36.5px;color:#3b4cc0;transform:scaleX(0.8982);">SCRUM-21</span>
<svg class="b" style="left:978px;top:1288.85px;" width="40" height="40" viewBox="0 0 40 40"><rect width="40" height="40" rx="5" fill="#dc5f3c"/><circle cx="20" cy="20" r="10" fill="#fff"/></svg>
<svg class="b" style="left:1027.8px;top:1293.25px;" width="30.5" height="30.5" viewBox="0 0 32 32"><path d="M3 8.2 H29 M3 23.8 H29" stroke="#e8ab3a" stroke-width="5.4" fill="none" stroke-linecap="round"/></svg>
<div class="b" style="left:0px;top:1426.4px;width:1403px;height:2.2px;background:#ebecf0;"></div>
<svg class="b" style="left:288px;top:1367px;" width="40" height="40" viewBox="0 0 40 40"><rect width="40" height="40" rx="5" fill="#6555b9"/><path d="M21.2 6.2 L10.6 21.4 Q10 22.6 11.4 22.6 L18.6 22.6 L18.8 33 Q19.4 34.6 20.6 33.2 L29.6 18.6 Q30 17.4 28.8 17.4 L21.8 17.4 L21.9 7 Q21.9 5.6 21.2 6.2 Z" fill="#fff"/></svg>
<div class="c" style="left:340px;top:1360.2px;width:333px;height:60px;-webkit-mask-image:linear-gradient(90deg,#000 89.2%,transparent 100%);mask-image:linear-gradient(90deg,#000 89.2%,transparent 100%);">
<span class="t" style="left:-0.29px;top:11.30px;font-size:36.5px;color:#3b4cc0;transform:scaleX(0.9300);">32</span>
</div>
<span class="t" style="left:699.99px;top:1371.50px;font-size:36.5px;color:#3b4cc0;transform:scaleX(0.9120);">SCRUM-302</span>
<svg class="b" style="left:978px;top:1370.8px;" width="40" height="40" viewBox="0 0 40 40"><rect width="40" height="40" rx="5" fill="#6555b9"/><path d="M21.2 6.2 L10.6 21.4 Q10 22.6 11.4 22.6 L18.6 22.6 L18.8 33 Q19.4 34.6 20.6 33.2 L29.6 18.6 Q30 17.4 28.8 17.4 L21.8 17.4 L21.9 7 Q21.9 5.6 21.2 6.2 Z" fill="#fff"/></svg>
<svg class="b" style="left:1027.8px;top:1375.2px;" width="30.5" height="30.5" viewBox="0 0 32 32"><path d="M3 8.2 H29 M3 23.8 H29" stroke="#e8ab3a" stroke-width="5.4" fill="none" stroke-linecap="round"/></svg>
<div class="b" style="left:0px;top:1508.35px;width:1403px;height:2.2px;background:#ebecf0;"></div>
<svg class="b" style="left:288px;top:1448.95px;" width="40" height="40" viewBox="0 0 40 40"><rect width="40" height="40" rx="5" fill="#6555b9"/><path d="M21.2 6.2 L10.6 21.4 Q10 22.6 11.4 22.6 L18.6 22.6 L18.8 33 Q19.4 34.6 20.6 33.2 L29.6 18.6 Q30 17.4 28.8 17.4 L21.8 17.4 L21.9 7 Q21.9 5.6 21.2 6.2 Z" fill="#fff"/></svg>
<svg class="b" style="left:234.8px;top:1460.75px;" width="21" height="13" viewBox="0 0 21 13"><path d="M2.2 1 H18.8 Q20.6 1 19.4 2.6 L11.4 11.6 Q10.5 12.6 9.6 11.6 L1.6 2.6 Q0.4 1 2.2 1 Z" fill="#7b819b"/></svg>
<div class="c" style="left:340px;top:1442.15px;width:333px;height:60px;-webkit-mask-image:linear-gradient(90deg,#000 89.2%,transparent 100%);mask-image:linear-gradient(90deg,#000 89.2%,transparent 100%);">
<span class="t" style="left:-2.13px;top:11.30px;font-size:36.5px;color:#3b4cc0;transform:scaleX(0.9300);">Inchon&#x27;s pubic Beyer tr</span>
</div>
<span class="t" style="left:700.01px;top:1453.45px;font-size:36.5px;color:#3b4cc0;transform:scaleX(0.9016);">SCRUM-3</span>
<svg class="b" style="left:978px;top:1452.75px;" width="40" height="40" viewBox="0 0 40 40"><rect width="40" height="40" rx="5" fill="#6555b9"/><path d="M21.2 6.2 L10.6 21.4 Q10 22.6 11.4 22.6 L18.6 22.6 L18.8 33 Q19.4 34.6 20.6 33.2 L29.6 18.6 Q30 17.4 28.8 17.4 L21.8 17.4 L21.9 7 Q21.9 5.6 21.2 6.2 Z" fill="#fff"/></svg>
<svg class="b" style="left:1027.8px;top:1457.15px;" width="30.5" height="30.5" viewBox="0 0 32 32"><path d="M3 13.5 L16 6.5 L29 13.5" stroke="#da5b3b" stroke-width="5" fill="none" stroke-linecap="round" stroke-linejoin="round"/><path d="M3 25.5 L16 18.5 L29 25.5" stroke="#e17957" stroke-width="5" fill="none" stroke-linecap="round" stroke-linejoin="round"/></svg>
<div class="b" style="left:0px;top:1590.3px;width:1403px;height:2.2px;background:#ebecf0;"></div>
<svg class="b" style="left:314.6px;top:1542.7px;" width="21" height="13" viewBox="0 0 21 13"><path d="M2.2 1 H18.8 Q20.6 1 19.4 2.6 L11.4 11.6 Q10.5 12.6 9.6 11.6 L1.6 2.6 Q0.4 1 2.2 1 Z" fill="#7b819b"/></svg>
<svg class="b" style="left:368px;top:1537.1px;" width="40" height="31" viewBox="0 0 40 33"><g fill="none" stroke="#6c6c6c" stroke-width="3.3"><path d="M8 12 A11.6 11.6 0 1 1 19.6 25.4 H2"/><path d="M24 25.4 H33"/></g><path d="M1 10.2 H14 L7.6 17.6 Z" fill="#6c6c6c"/><path d="M31 18 L39.5 25.4 L31 32.8 Z" fill="#6c6c6c"/></svg>
<div class="c" style="left:421px;top:1524.1px;width:252px;height:60px;-webkit-mask-image:linear-gradient(90deg,#000 85.7%,transparent 100%);mask-image:linear-gradient(90deg,#000 85.7%,transparent 100%);">
<span class="t" style="left:-1.78px;top:11.30px;font-size:36.5px;color:#1d2547;transform:scaleX(0.9300);">Future sprint: SCRUM</span>
</div>
<div class="b" style="left:0px;top:1672.25px;width:1403px;height:2.2px;background:#ebecf0;"></div>
<svg class="b" style="left:448px;top:1612.85px;" width="40" height="40" viewBox="0 0 40 40"><rect width="40" height="40" rx="5" fill="#6bb082"/><path d="M12.5 9 H27.5 Q29 9 29 10.5 V31.5 L20 23 L11 31.5 V10.5 Q11 9 12.5 9 Z" fill="#fff"/></svg>
<div class="c" style="left:500.5px;top:1606.05px;width:172.5px;height:60px;-webkit-mask-image:linear-gradient(90deg,#000 79.0%,transparent 100%);mask-image:linear-gradient(90deg,#000 79.0%,transparent 100%);">
<span class="t" style="left:-1.78px;top:11.30px;font-size:36.5px;color:#3b4cc0;transform:scaleX(0.9300);">Boru catastr</span>
</div>
<span class="t" style="left:699.99px;top:1617.35px;font-size:36.5px;color:#3b4cc0;transform:scaleX(0.9082);">SCRUM-23</span>
<svg class="b" style="left:978px;top:1616.65px;" width="40" height="40" viewBox="0 0 40 40"><rect width="40" height="40" rx="5" fill="#6bb082"/><path d="M12.5 9 H27.5 Q29 9 29 10.5 V31.5 L20 23 L11 31.5 V10.5 Q11 9 12.5 9 Z" fill="#fff"/></svg>
<svg class="b" style="left:1027.8px;top:1621.05px;" width="30.5" height="30.5" viewBox="0 0 32 32"><path d="M3 13.2 L16 20.7 L29 13.2" stroke="#4256ef" stroke-width="5" fill="none" stroke-linecap="round" stroke-linejoin="round"/></svg>
<svg class="b" style="left:20.4px;top:706px;" width="18" height="52" viewBox="0 0 18 52"><g fill="#8b90a4"><rect x="0" y="0" width="5.6" height="5.6"/><rect x="0" y="15.1" width="5.6" height="5.6"/><rect x="0" y="30.2" width="5.6" height="5.6"/><rect x="0" y="45.3" width="5.6" height="5.6"/><rect x="11.8" y="0" width="5.6" height="5.6"/><rect x="11.8" y="15.1" width="5.6" height="5.6"/><rect x="11.8" y="30.2" width="5.6" height="5.6"/><rect x="11.8" y="45.3" width="5.6" height="5.6"/></g></svg>
<div class="b" style="left:62px;top:721.5px;width:20.4px;height:20.4px;background:#babdcc;border-radius:10.2px;"></div>
<svg class="b" style="left:101px;top:1457.65px;" width="34" height="26" viewBox="0 0 34 26"><path d="M3 13.5 L11.5 21.5 L30.5 3.5" fill="none" stroke="#3f8f22" stroke-width="5.6"/></svg>
<div class="b" style="left:0px;top:1675.5px;width:1403px;height:7px;background:#fff;"></div>
<div class="b" style="left:0px;top:1682px;width:1403px;height:39.5px;background:#f1f1f1;"></div>
<div class="b" style="left:42px;top:1682px;width:1361px;height:39.5px;background:#c1c1c1;"></div>
<svg class="b" style="left:14px;top:1690px;" width="14" height="24" viewBox="0 0 14 24"><path d="M12.5 2 V22 L2 12 Z" fill="#a3a3a3"/></svg>
<div class="b" style="left:0px;top:1721.5px;width:1403px;height:1.8px;background:#e3e4e8;"></div>
<div class="b" style="left:0px;top:1723.3px;width:1403px;height:157px;background:#f4f5f7;"></div>
<span class="t" style="left:36.62px;top:1747.18px;font-size:30.5px;color:#2b3152;transform:scaleX(0.9932);">Showing <b>142</b> items</span>
<div class="b" style="left:354px;top:1733px;width:396px;height:56.6px;background:#e3e4ea;border-radius:6px;"></div>
<svg class="b" style="left:375px;top:1742px;" width="40" height="39" viewBox="0 0 40 39"><g fill="none" stroke="#3a4163" stroke-width="2.6"><path d="M9.5 8 V5.5 Q9.5 2 13 2 H34.5 Q38 2 38 5.5 V25 Q38 28.5 34.5 28.5 H31.5"/><rect x="1.8" y="9" width="28.4" height="28" rx="3.5" fill="#e3e4ea"/></g></svg>
<span class="t" style="left:379.44px;top:1753.93px;font-size:23px;color:#3a4163;font-weight:700;letter-spacing:-0.8px;">x2</span>
<span class="t" style="left:424.04px;top:1747.18px;font-size:30.5px;color:#3a4163;transform:scaleX(0.9958);"><b>4</b> items with duplicates</span>
<div class="b" style="left:0px;top:1880px;width:1403px;height:39px;background:#f1f1f1;"></div>
<div class="b" style="left:42px;top:1880px;width:740px;height:39px;background:#c1c1c1;"></div>
<svg class="b" style="left:14px;top:1887.5px;" width="14" height="24" viewBox="0 0 14 24"><path d="M12.5 2 V22 L2 12 Z" fill="#a3a3a3"/></svg>
<svg class="b" style="left:1372px;top:1887.5px;" width="14" height="24" viewBox="0 0 14 24"><path d="M1.5 2 V22 L12 12 Z" fill="#505050"/></svg>
<svg class="b" style="left:0px;top:1899px;" width="20" height="20" viewBox="0 0 20 20"><path d="M0 0 V20 H20 A20 20 0 0 1 0 0 Z" fill="#15191c"/></svg>
<div class="b" style="left:1403px;top:219.5px;width:1320px;height:1699.5px;background:#fff;"></div>
<div class="b" style="left:1403px;top:219.5px;width:1320px;height:68px;background:#eef0f7;"></div>
<div class="b" style="left:1403px;top:285.8px;width:1320px;height:2.4px;background:#d5e0fa;"></div>
<svg class="b" style="left:1427.5px;top:235.5px;" width="36" height="36" viewBox="0 0 36 36"><g fill="#474747"><rect x="1.2" y="0" width="6.2" height="3.6"/><rect x="11.2" y="0" width="6.2" height="3.6"/><rect x="21.2" y="0" width="6.2" height="3.6"/><rect x="30.8" y="0" width="3.6" height="5"/><rect x="30.8" y="9" width="3.6" height="6"/><rect x="0" y="2.5" width="3.6" height="5"/><rect x="0" y="11.5" width="3.6" height="6.2"/><rect x="0" y="21.5" width="3.6" height="6.2"/><rect x="1.2" y="31" width="5" height="3.6"/><rect x="9.8" y="31" width="5" height="3.6"/></g><path d="M34 34 L18.5 18.5 M16.8 34.5 V16.8 H34.5" fill="none" stroke="#474747" stroke-width="3.6"/></svg>
<svg class="b" style="left:1495px;top:237.5px;" width="41" height="31" viewBox="0 0 41 31"><g fill="none" stroke="#474747" stroke-width="3.8"><path d="M6.6 24 V2.4 H37"/><path d="M0 27.6 H19.5" stroke-width="5.2"/><rect x="26.6" y="10" width="12" height="19" rx="1.5"/></g></svg>
<div class="b" style="left:1560px;top:233px;width:3px;height:39.5px;background:#d5e0fa;"></div>
<span class="t" style="left:1605.62px;top:239.50px;font-size:30px;color:#474747;transform:scaleX(0.9669);">Elements</span>
<span class="t" style="left:1785.49px;top:239.50px;font-size:30px;color:#474747;transform:scaleX(0.9886);">Console</span>
<span class="t" style="left:1951.21px;top:239.50px;font-size:30px;color:#474747;transform:scaleX(0.9478);">Sources</span>
<span class="t" style="left:2112.46px;top:239.50px;font-size:30px;color:#3a57d5;transform:scaleX(1.0315);">Network</span>
<div class="b" style="left:2085.5px;top:283.6px;width:173px;height:4.6px;background:#4a65e3;"></div>
<svg class="b" style="left:2267px;top:240px;" width="32" height="28" viewBox="0 0 32 28"><path d="M3 2.5 L14 14 L3 25.5 M17 2.5 L28 14 L17 25.5" fill="none" stroke="#5f5f5f" stroke-width="3.6"/></svg>
<svg class="b" style="left:2316px;top:241px;" width="32" height="27" viewBox="0 0 32 27"><path d="M15.6 1.2 L30.4 25.6 H0.8 Z" fill="#d3733c" stroke="#d3733c" stroke-width="1.4" stroke-linejoin="round"/><path d="M15.6 9 V17.5" stroke="#fff" stroke-width="3"/><circle cx="15.6" cy="21.4" r="1.7" fill="#fff"/></svg>
<span class="t" style="left:2356.01px;top:241.41px;font-size:30px;color:#474747;transform:scaleX(0.9713);">71</span>
<svg class="b" style="left:2418.5px;top:244.5px;" width="27" height="26" viewBox="0 0 27 26"><path d="M3 0.5 H23.5 Q26 0.5 26 3 V17 Q26 19.5 23.5 19.5 H6.5 L0.5 25 V3 Q0.5 0.5 3 0.5 Z" fill="#d3733c"/><path d="M13.2 4 V11.5" stroke="#fff" stroke-width="3"/><circle cx="13.2" cy="15.2" r="1.7" fill="#fff"/></svg>
<span class="t" style="left:2454.21px;top:242.60px;font-size:30px;color:#474747;">1</span>
<div class="b" style="left:2498px;top:233px;width:3px;height:39.5px;background:#d5e0fa;"></div>
<svg class="b" style="left:2522.9px;top:229.9px;" width="46.2" height="46.2" viewBox="0 0 44 44"><path d="M26.21 10.12 L25.31 5.73 L18.69 5.73 L17.79 10.12 L13.82 12.42 L9.57 11.00 L6.26 16.73 L9.61 19.70 L9.61 24.30 L6.26 27.27 L9.57 33.00 L13.82 31.58 L17.79 33.88 L18.69 38.27 L25.31 38.27 L26.21 33.88 L30.18 31.58 L34.43 33.00 L37.74 27.27 L34.39 24.30 L34.39 19.70 L37.74 16.73 L34.43 11.00 L30.18 12.42 Z" fill="none" stroke="#474747" stroke-width="3.6" stroke-linejoin="round"/><circle cx="22" cy="22" r="6.2" fill="#474747"/></svg>
<svg class="b" style="left:2606px;top:233px;" width="20" height="40" viewBox="0 0 20 40"><g fill="#474747"><circle cx="9.7" cy="8.6" r="3.9"/><circle cx="9.7" cy="20" r="3.9"/><circle cx="9.7" cy="31.4" r="3.9"/></g></svg>
<svg class="b" style="left:2666px;top:238px;" width="30" height="30" viewBox="0 0 30 30"><path d="M3.5 3.5 L26.5 26.5 M26.5 3.5 L3.5 26.5" stroke="#474747" stroke-width="3.6" fill="none"/></svg>
<div class="b" style="left:1403px;top:288.2px;width:1320px;height:130px;background:#fff;"></div>
<svg class="b" style="left:1425px;top:301px;" width="40" height="40" viewBox="0 0 40 40"><circle cx="20" cy="20" r="16.8" fill="none" stroke="#c1433a" stroke-width="4"/><rect x="12.3" y="12.3" width="15.4" height="15.4" fill="#c1433a"/></svg>
<svg class="b" style="left:1495px;top:301px;" width="40" height="40" viewBox="0 0 40 40"><circle cx="20" cy="20" r="16.8" fill="none" stroke="#474747" stroke-width="4"/><path d="M8.3 31.7 L31.7 8.3" stroke="#474747" stroke-width="4"/></svg>
<div class="b" style="left:1560px;top:301.5px;width:3px;height:39px;background:#d5e0fa;"></div>
<svg class="b" style="left:1592px;top:305px;" width="32" height="32" viewBox="0 0 32 32"><path d="M2.2 0.8 H29.6 Q31.6 1 30.4 2.8 L18.6 17.6 V29 Q18.4 30.8 16.6 30.8 H15.2 Q13.4 30.8 13.2 29 V17.6 L1.4 2.8 Q0.2 1 2.2 0.8 Z" fill="#c1433a"/></svg>
<svg class="b" style="left:1658px;top:301px;" width="40" height="40" viewBox="0 0 40 40"><circle cx="15" cy="15.3" r="11.2" fill="none" stroke="#474747" stroke-width="4"/><path d="M23 23.4 L35.6 36" stroke="#474747" stroke-width="4.4"/></svg>
<div class="b" style="left:1722.5px;top:301.5px;width:3px;height:39px;background:#d5e0fa;"></div>
<div class="b" style="left:1750px;top:306px;width:30px;height:30px;background:#fff;border-radius:5.5px;border:2.6px solid #757575;"></div>
<span class="t" style="left:1795.01px;top:307.41px;font-size:30px;color:#474747;transform:scaleX(0.9700);">Preserve log</span>
<div class="b" style="left:1980px;top:301.5px;width:3px;height:39px;background:#d5e0fa;"></div>
<div class="b" style="left:2008px;top:306px;width:30px;height:30px;background:#fff;border-radius:5.5px;border:2.6px solid #757575;"></div>
<span class="t" style="left:2052.63px;top:307.41px;font-size:30px;color:#474747;transform:scaleX(0.9640);">Disable cache</span>
<span class="t" style="left:2259.85px;top:307.41px;font-size:30px;color:#474747;transform:scaleX(1.0772);">No throttling</span>
<svg class="b" style="left:2473.6px;top:312.6px;" width="19.8" height="14.4" viewBox="0 0 19.8 14.4"><path d="M0 0 H19.8 L9.9 14.4 Z" fill="#474747"/></svg>
<svg class="b" style="left:2530px;top:302px;" width="44" height="40" viewBox="0 0 44 40"><g fill="none" stroke="#8e8e8e" stroke-width="3.4" stroke-linecap="butt"><path d="M2.5 12.5 A27.5 27.5 0 0 1 41.5 12.5"/><path d="M9.5 20 A18 18 0 0 1 34.5 20"/></g><path d="M16.5 25.5 L25.5 21.5 V31 Z" fill="#8e8e8e"/><circle cx="33.5" cy="30" r="5.2" fill="none" stroke="#8e8e8e" stroke-width="4"/><g stroke="#8e8e8e" stroke-width="3.2"><path d="M33.5 21.5 V38.5 M26.2 25.8 L40.8 34.2 M26.2 34.2 L40.8 25.8"/></g><circle cx="33.5" cy="30" r="2.3" fill="#fff"/></svg>
<div class="b" style="left:2595.5px;top:301.5px;width:3px;height:39px;background:#d5e0fa;"></div>
<div class="b" style="left:2633px;top:301.5px;width:3px;height:39px;background:#d5e0fa;"></div>
<svg class="b" style="left:2657.9px;top:297.9px;" width="46.2" height="46.2" viewBox="0 0 44 44"><path d="M26.21 10.12 L25.31 5.73 L18.69 5.73 L17.79 10.12 L13.82 12.42 L9.57 11.00 L6.26 16.73 L9.61 19.70 L9.61 24.30 L6.26 27.27 L9.57 33.00 L13.82 31.58 L17.79 33.88 L18.69 38.27 L25.31 38.27 L26.21 33.88 L30.18 31.58 L34.43 33.00 L37.74 27.27 L34.39 24.30 L34.39 19.70 L37.74 16.73 L34.43 11.00 L30.18 12.42 Z" fill="none" stroke="#474747" stroke-width="3.6" stroke-linejoin="round"/><circle cx="22" cy="22" r="6.2" fill="#474747"/></svg>
<svg class="b" style="left:1429px;top:367px;" width="32" height="35" viewBox="0 0 32 35"><g fill="none" stroke="#474747" stroke-width="4"><path d="M16 26 V4.5 M6.5 13 L16 3.5 L25.5 13"/><path d="M2.8 25.6 V30 Q2.8 32.6 5.4 32.6 H26.6 Q29.2 32.6 29.2 30 V25.6"/></g></svg>
<svg class="b" style="left:1499px;top:367px;" width="32" height="35" viewBox="0 0 32 35"><g fill="none" stroke="#474747" stroke-width="4"><path d="M16 1.5 V23.5 M6.5 14.5 L16 24 L25.5 14.5"/><path d="M2.8 25.6 V30 Q2.8 32.6 5.4 32.6 H26.6 Q29.2 32.6 29.2 30 V25.6"/></g></svg>
<div class="b" style="left:1403px;top:417px;width:1320px;height:2.4px;background:#d5e0fa;"></div>
<div class="b" style="left:1403px;top:419.4px;width:1320px;height:66px;background:#fff;"></div>
<div class="b" style="left:1415px;top:428px;width:408.5px;height:49px;background:#fff;border-radius:10.5px;border:2.8px solid #3449c6;"></div>
<div class="b" style="left:1425.4px;top:435px;width:2px;height:40.5px;background:#111;"></div>
<span class="t" style="left:1424.59px;top:440.91px;font-size:30px;color:#8a8a8a;transform:scaleX(0.9810);">Filter</span>
<div class="b" style="left:1855px;top:438px;width:30px;height:30px;background:#fff;border-radius:5.5px;border:2.6px solid #757575;"></div>
<span class="t" style="left:1898.68px;top:439.61px;font-size:30px;color:#474747;transform:scaleX(1.0202);">Invert</span>
<div class="b" style="left:2003px;top:433px;width:3px;height:39.5px;background:#d5e0fa;"></div>
<span class="t" style="left:2029.11px;top:439.61px;font-size:30px;color:#474747;transform:scaleX(0.9722);">Request types</span>
<svg class="b" style="left:2233px;top:442.6px;" width="19.6" height="14.2" viewBox="0 0 19.6 14.2"><path d="M0 0 H19.6 L9.8 14.2 Z" fill="#474747"/></svg>
<div class="b" style="left:2280px;top:433px;width:3px;height:39.5px;background:#d5e0fa;"></div>
<span class="t" style="left:2304.43px;top:439.61px;font-size:30px;color:#474747;transform:scaleX(1.0427);">More filters</span>
<svg class="b" style="left:2476px;top:442.6px;" width="19.6" height="14.2" viewBox="0 0 19.6 14.2"><path d="M0 0 H19.6 L9.8 14.2 Z" fill="#474747"/></svg>
<div class="b" style="left:1403px;top:485.2px;width:1320px;height:2.4px;background:#d5e0fa;"></div>
<div class="b" style="left:1403px;top:487.6px;width:1320px;height:199px;background:#fff;"></div>
<div class="b" style="left:1685.5px;top:487.6px;width:2.3px;height:199px;background:#d3dffa;"></div>
<div class="b" style="left:1965.4px;top:487.6px;width:2.3px;height:199px;background:#d3dffa;"></div>
<div class="b" style="left:2245.9px;top:487.6px;width:2.3px;height:199px;background:#d3dffa;"></div>
<div class="b" style="left:2528.1px;top:487.6px;width:2.3px;height:199px;background:#d3dffa;"></div>
<span class="t" style="left:1590.31px;top:502.43px;font-size:24.3px;color:#1f1f1f;transform:scaleX(0.9714);">2000 ms</span>
<span class="t" style="left:1870.96px;top:502.43px;font-size:24.3px;color:#1f1f1f;transform:scaleX(0.9644);">4000 ms</span>
<span class="t" style="left:2150.30px;top:502.43px;font-size:24.3px;color:#1f1f1f;transform:scaleX(0.9716);">6000 ms</span>
<span class="t" style="left:2432.98px;top:502.43px;font-size:24.3px;color:#1f1f1f;transform:scaleX(0.9697);">8000 ms</span>
<span class="t" style="left:2700.65px;top:502.43px;font-size:24.3px;color:#1f1f1f;">1</span>
<div class="b" style="left:1400px;top:487.6px;width:17.5px;height:46px;background:#dbe6fc;border-radius:0 7px 7px 0;border:1.4px solid #b9cdf7;"></div>
<div class="b" style="left:1406.6px;top:501.5px;width:3.6px;height:17.5px;background:#2f45b5;"></div>
<div class="b" style="left:1404.5px;top:533.5px;width:5.4px;height:153px;background:#a9c1f6;"></div>
<div class="b" style="left:2713.5px;top:487.6px;width:9.5px;height:46px;background:#dbe6fc;border-radius:7px 0 0 7px;border:1.4px solid #b9cdf7;border-right:none;"></div>
<div class="b" style="left:2719.5px;top:501.5px;width:3.6px;height:17.5px;background:#2f45b5;"></div>
<div class="b" style="left:1410px;top:557.8px;width:11px;height:5.2px;background:#e3b13c;"></div>
<div class="b" style="left:1423px;top:557.8px;width:26px;height:5.2px;background:#c58af2;"></div>
<div class="b" style="left:1451px;top:557.8px;width:30px;height:5.2px;background:#6cb867;"></div>
<div class="b" style="left:1483px;top:557.8px;width:26px;height:5.2px;background:#6a86ea;"></div>
<div class="b" style="left:1546px;top:557.8px;width:22px;height:5.2px;background:#6cb867;"></div>
<div class="b" style="left:1742px;top:557.8px;width:15px;height:5.2px;background:#6cb867;"></div>
<div class="b" style="left:1759px;top:557.8px;width:10px;height:5.2px;background:#6a86ea;"></div>
<div class="b" style="left:1771px;top:557.8px;width:12px;height:5.2px;background:#6cb867;"></div>
<div class="b" style="left:1786px;top:557.8px;width:3px;height:5.2px;background:#6a86ea;"></div>
<div class="b" style="left:1791px;top:557.8px;width:16px;height:5.2px;background:#6cb867;"></div>
<div class="b" style="left:1812px;top:557.8px;width:5px;height:5.2px;background:#6cb867;"></div>
<div class="b" style="left:1819px;top:557.8px;width:10px;height:5.2px;background:#6cb867;"></div>
<div class="b" style="left:1832px;top:557.8px;width:3px;height:5.2px;background:#6a86ea;"></div>
<div class="b" style="left:1838px;top:557.8px;width:17px;height:5.2px;background:#6cb867;"></div>
<div class="b" style="left:1734px;top:550.3px;width:7px;height:5.2px;background:#e4e4e4;"></div>
<div class="b" style="left:1840px;top:550.3px;width:6px;height:5.2px;background:#e4e4e4;"></div>
<div class="b" style="left:1867px;top:550.3px;width:3px;height:5.2px;background:#ececec;"></div>
<div class="b" style="left:1546px;top:640.6px;width:22px;height:5.2px;background:#6cb867;"></div>
<div class="b" style="left:1769px;top:655.7px;width:14px;height:5.2px;background:#c58af2;"></div>
<div class="b" style="left:1785px;top:655.7px;width:19px;height:5.2px;background:#6cb867;"></div>
<div class="b" style="left:1809px;top:655.7px;width:15px;height:5.2px;background:#6cb867;"></div>
<div class="b" style="left:1826px;top:655.7px;width:6px;height:5.2px;background:#6a86ea;"></div>
<div class="b" style="left:1834px;top:655.7px;width:16px;height:5.2px;background:#6cb867;"></div>
<div class="b" style="left:1852px;top:655.7px;width:6px;height:5.2px;background:#6a86ea;"></div>
<div class="b" style="left:1782px;top:663px;width:17px;height:5.2px;background:#c58af2;"></div>
<div class="b" style="left:1802px;top:663px;width:15px;height:5.2px;background:#6cb867;"></div>
<div class="b" style="left:1820px;top:663px;width:2px;height:5.2px;background:#6a86ea;"></div>
<div class="b" style="left:1824px;top:663px;width:12px;height:5.2px;background:#6cb867;"></div>
<div class="b" style="left:1843px;top:663px;width:8px;height:5.2px;background:#e4e4e4;"></div>
<div class="b" style="left:1854px;top:663px;width:15px;height:5.2px;background:#6cb867;"></div>
<div class="b" style="left:1871px;top:663px;width:3px;height:5.2px;background:#6a86ea;"></div>
<div class="b" style="left:1884px;top:663px;width:22px;height:5.2px;background:#6cb867;"></div>
<div class="b" style="left:2004px;top:663px;width:15px;height:5.2px;background:#6cb867;"></div>
<div class="b" style="left:2022px;top:663px;width:3px;height:5.2px;background:#6a86ea;"></div>
<div class="b" style="left:2030px;top:663px;width:15px;height:5.2px;background:#6cb867;"></div>
<div class="b" style="left:2048px;top:663px;width:11px;height:5.2px;background:#6a86ea;"></div>
<div class="b" style="left:1780px;top:670.5px;width:36px;height:5.2px;background:#a8a8a8;"></div>
<div class="b" style="left:1819px;top:670.5px;width:15px;height:5.2px;background:#6cb867;"></div>
<div class="b" style="left:1848px;top:670.5px;width:4px;height:5.2px;background:#e4e4e4;"></div>
<div class="b" style="left:1855px;top:670.5px;width:16px;height:5.2px;background:#6cb867;"></div>
<div class="b" style="left:1873px;top:670.5px;width:13px;height:5.2px;background:#6a86ea;"></div>
<div class="b" style="left:1889px;top:670.5px;width:17px;height:5.2px;background:#6cb867;"></div>
<div class="b" style="left:1795px;top:678px;width:20px;height:5.2px;background:#c58af2;"></div>
<div class="b" style="left:1818px;top:678px;width:15px;height:5.2px;background:#6cb867;"></div>
<div class="b" style="left:1838px;top:678px;width:20px;height:5.2px;background:#6cb867;"></div>
<div class="b" style="left:1888px;top:678px;width:4px;height:5.2px;background:#e4e4e4;"></div>
<div class="b" style="left:1892px;top:678px;width:16px;height:5.2px;background:#6cb867;"></div>
<div class="b" style="left:1916px;top:678px;width:20px;height:5.2px;background:#6cb867;"></div>
<div class="b" style="left:1939px;top:678px;width:10px;height:5.2px;background:#6a86ea;"></div>
<div class="b" style="left:1952px;top:678px;width:13px;height:5.2px;background:#6cb867;"></div>
<div class="b" style="left:1968px;top:678px;width:12px;height:5.2px;background:#6a86ea;"></div>
<div class="b" style="left:2003px;top:678px;width:16px;height:5.2px;background:#6cb867;"></div>
<div class="b" style="left:2043px;top:678px;width:22px;height:5.2px;background:#6cb867;"></div>
<div class="b" style="left:2070px;top:678px;width:14px;height:5.2px;background:#6cb867;"></div>
<div class="b" style="left:2087px;top:678px;width:19px;height:5.2px;background:#6a86ea;"></div>
<div class="b" style="left:2153px;top:678px;width:15px;height:5.2px;background:#6cb867;"></div>
<div class="b" style="left:2171px;top:678px;width:10px;height:5.2px;background:#6a86ea;"></div>
<div class="b" style="left:2445px;top:678px;width:32px;height:5.2px;background:#6cb867;"></div>
<div class="b" style="left:2583px;top:678px;width:26px;height:5.2px;background:#6cb867;"></div>
<div class="b" style="left:1509px;top:565px;width:2px;height:7px;background:#dde5fa;"></div>
<div class="b" style="left:1507px;top:580px;width:2px;height:7px;background:#dde5fa;"></div>
<div class="b" style="left:1507px;top:595px;width:2px;height:7px;background:#dde5fa;"></div>
<div class="b" style="left:1511px;top:603px;width:2px;height:7px;background:#dde5fa;"></div>
<div class="b" style="left:1507px;top:610px;width:2px;height:7px;background:#dde5fa;"></div>
<div class="b" style="left:1507px;top:625px;width:2px;height:7px;background:#dde5fa;"></div>
<div class="b" style="left:1511px;top:632px;width:2px;height:7px;background:#dde5fa;"></div>
<div class="b" style="left:1507px;top:633px;width:2px;height:7px;background:#dde5fa;"></div>
<div class="b" style="left:1712px;top:564px;width:2px;height:7px;background:#dde5fa;"></div>
<div class="b" style="left:1712px;top:594px;width:2px;height:7px;background:#dde5fa;"></div>
<div class="b" style="left:1712px;top:616px;width:2px;height:7px;background:#dde5fa;"></div>
<div class="b" style="left:1748px;top:564px;width:2px;height:7px;background:#dde5fa;"></div>
<div class="b" style="left:1762px;top:564px;width:2px;height:7px;background:#dde5fa;"></div>
<div class="b" style="left:1748px;top:594px;width:2px;height:7px;background:#dde5fa;"></div>
<div class="b" style="left:1749px;top:646px;width:2px;height:7px;background:#dde5fa;"></div>
<div class="b" style="left:1916px;top:572px;width:2px;height:7px;background:#dde5fa;"></div>
<div class="b" style="left:1954px;top:594px;width:2px;height:7px;background:#dde5fa;"></div>
<div class="b" style="left:2036px;top:594px;width:2px;height:7px;background:#dde5fa;"></div>
<div class="b" style="left:2117px;top:564px;width:2px;height:7px;background:#dde5fa;"></div>
<div class="b" style="left:1742.6px;top:537px;width:2.6px;height:150px;background:#2b3fa4;"></div>
<div class="b" style="left:1835.2px;top:537px;width:2.8px;height:150px;background:#c24438;"></div>
<div class="b" style="left:1403px;top:686.9px;width:1320px;height:1.8px;background:#d5e0fa;"></div>
<div class="b" style="left:1403px;top:688.8px;width:1320px;height:67px;background:#f8f9fd;"></div>
<span class="t" style="left:1414.95px;top:707.31px;font-size:30px;color:#1f1f1f;transform:scaleX(0.9943);">Name</span>
<span class="t" style="left:1719.24px;top:707.31px;font-size:30px;color:#1f1f1f;transform:scaleX(0.9250);">Sta...</span>
<span class="t" style="left:1810.84px;top:707.31px;font-size:30px;color:#1f1f1f;transform:scaleX(0.9756);">Type</span>
<span class="t" style="left:1902.06px;top:707.31px;font-size:30px;color:#1f1f1f;transform:scaleX(1.0618);">Initiator</span>
<span class="t" style="left:2053.74px;top:707.31px;font-size:30px;color:#1f1f1f;transform:scaleX(0.9252);">Size</span>
<span class="t" style="left:2145.83px;top:707.31px;font-size:30px;color:#1f1f1f;">Time</span>
<span class="t" style="left:2238.87px;top:707.31px;font-size:30px;color:#1f1f1f;transform:scaleX(1.0034);">Waterfall</span>
<svg class="b" style="left:2678.5px;top:715px;" width="20" height="14" viewBox="0 0 20 14"><path d="M10 0 L20 14 H0 Z" fill="#474747"/></svg>
<div class="c" style="left:1403px;top:756.8px;width:1320px;height:1096.2px;">
<div class="b" style="left:0px;top:-5.1px;width:824px;height:52.5px;background:#f7f8fd;"></div>
<div class="b" style="left:0px;top:99.9px;width:824px;height:52.5px;background:#f7f8fd;"></div>
<div class="b" style="left:0px;top:204.9px;width:824px;height:52.5px;background:#f7f8fd;"></div>
<div class="b" style="left:0px;top:309.9px;width:824px;height:52.5px;background:#f7f8fd;"></div>
<div class="b" style="left:0px;top:414.9px;width:824px;height:52.5px;background:#f7f8fd;"></div>
<div class="b" style="left:0px;top:519.9px;width:824px;height:52.5px;background:#f7f8fd;"></div>
<div class="b" style="left:0px;top:624.9px;width:824px;height:52.5px;background:#f7f8fd;"></div>
<div class="b" style="left:0px;top:729.9px;width:824px;height:52.5px;background:#f7f8fd;"></div>
<div class="b" style="left:0px;top:834.9px;width:824px;height:52.5px;background:#f7f8fd;"></div>
<div class="b" style="left:0px;top:939.9px;width:824px;height:52.5px;background:#f7f8fd;"></div>
<div class="b" style="left:0px;top:1044.9px;width:824px;height:52.5px;background:#f7f8fd;"></div>
<div class="b" style="left:824px;top:-5.7px;width:457px;height:52.95px;background:#f7f8fd;"></div>
<div class="b" style="left:824px;top:100.2px;width:457px;height:52.95px;background:#f7f8fd;"></div>
<div class="b" style="left:824px;top:206.1px;width:457px;height:52.95px;background:#f7f8fd;"></div>
<div class="b" style="left:824px;top:312px;width:457px;height:52.95px;background:#f7f8fd;"></div>
<div class="b" style="left:824px;top:417.9px;width:457px;height:52.95px;background:#f7f8fd;"></div>
<div class="b" style="left:824px;top:523.8px;width:457px;height:52.95px;background:#f7f8fd;"></div>
<div class="b" style="left:824px;top:629.7px;width:457px;height:52.95px;background:#f7f8fd;"></div>
<div class="b" style="left:824px;top:735.6px;width:457px;height:52.95px;background:#f7f8fd;"></div>
<div class="b" style="left:824px;top:841.5px;width:457px;height:52.95px;background:#f7f8fd;"></div>
<div class="b" style="left:824px;top:947.4px;width:457px;height:52.95px;background:#f7f8fd;"></div>
<div class="b" style="left:824px;top:1053.3px;width:457px;height:52.95px;background:#f7f8fd;"></div>
<div class="b" style="left:824px;top:0px;width:4px;height:1100px;background:#e8edfb;"></div>
<div class="b" style="left:1090.2px;top:0px;width:2.2px;height:1100px;background:#e1e8f8;"></div>
<div class="b" style="left:958.8px;top:0px;width:2.6px;height:1100px;background:#3c60d0;"></div>
<div class="b" style="left:993.8px;top:0px;width:2.6px;height:1100px;background:#a22a22;"></div>
<div class="b" style="left:1052.5px;top:14.8px;width:4.9px;height:12.4px;background:#d4d4d4;"></div>
<div class="b" style="left:1060px;top:4.5px;width:7.7px;height:32.6px;background:#6fbb6a;"></div>
<div class="b" style="left:1067.7px;top:7.3px;width:5.1px;height:27.4px;background:#69a5ee;"></div>
<div class="b" style="left:1052.5px;top:67.75px;width:4.9px;height:12.4px;background:#d4d4d4;"></div>
<div class="b" style="left:1060px;top:57.45px;width:7.7px;height:32.6px;background:#6fbb6a;"></div>
<div class="b" style="left:1067.7px;top:60.25px;width:5.1px;height:27.4px;background:#69a5ee;"></div>
<div class="b" style="left:1057.6px;top:119.7px;width:9.8px;height:17px;background:#fff;border:2.4px solid #cfcfcf;"></div>
<div class="b" style="left:1070px;top:110.4px;width:7.7px;height:32.6px;background:#6fbb6a;"></div>
<div class="b" style="left:1077.7px;top:110.4px;width:7.1px;height:32.6px;background:#69a5ee;"></div>
<div class="b" style="left:1079.3px;top:112.8px;width:3.9px;height:27.8px;background:#6b8ced;"></div>
<div class="b" style="left:1067.4px;top:166.15px;width:5.2px;height:27.4px;background:#69a5ee;"></div>
<div class="b" style="left:1067.4px;top:226.6px;width:4.6px;height:12.4px;background:#d4d4d4;"></div>
<div class="b" style="left:1075px;top:216.3px;width:10px;height:32.6px;background:#6fbb6a;"></div>
<div class="b" style="left:1085px;top:219.1px;width:5px;height:27.4px;background:#69a5ee;"></div>
<div class="b" style="left:1077.5px;top:279.55px;width:5px;height:12.4px;background:#d4d4d4;"></div>
<div class="b" style="left:1085px;top:269.25px;width:5.4px;height:32.6px;background:#6fbb6a;"></div>
<div class="b" style="left:1090.4px;top:269.25px;width:12.2px;height:32.6px;background:#69a5ee;"></div>
<div class="b" style="left:1092px;top:271.65px;width:9px;height:27.8px;background:#6b8ced;"></div>
<div class="b" style="left:1095px;top:325px;width:5px;height:27.4px;background:#69a5ee;"></div>
<div class="b" style="left:1095px;top:377.95px;width:5px;height:27.4px;background:#69a5ee;"></div>
<div class="b" style="left:1095px;top:430.9px;width:5px;height:27.4px;background:#69a5ee;"></div>
<div class="b" style="left:1095px;top:483.85px;width:5px;height:27.4px;background:#69a5ee;"></div>
<div class="b" style="left:1095px;top:536.8px;width:5px;height:27.4px;background:#69a5ee;"></div>
<div class="b" style="left:1097.5px;top:589.75px;width:5.2px;height:27.4px;background:#69a5ee;"></div>
<div class="b" style="left:1097.5px;top:642.7px;width:5.2px;height:27.4px;background:#69a5ee;"></div>
<div class="b" style="left:1097.5px;top:695.65px;width:5.2px;height:27.4px;background:#69a5ee;"></div>
<div class="b" style="left:1097.5px;top:748.6px;width:5.2px;height:27.4px;background:#69a5ee;"></div>
<div class="b" style="left:1100px;top:801.55px;width:5px;height:27.4px;background:#69a5ee;"></div>
<div class="b" style="left:1100px;top:854.5px;width:5px;height:27.4px;background:#69a5ee;"></div>
<div class="b" style="left:1107.5px;top:914.95px;width:4.5px;height:12.4px;background:#d4d4d4;"></div>
<div class="b" style="left:1115px;top:904.65px;width:7.6px;height:32.6px;background:#6fbb6a;"></div>
<div class="b" style="left:1122.6px;top:904.65px;width:7.4px;height:32.6px;background:#69a5ee;"></div>
<div class="b" style="left:1124.2px;top:907.05px;width:4.2px;height:27.8px;background:#6b8ced;"></div>
<div class="b" style="left:1215px;top:967.9px;width:4.8px;height:12.4px;background:#d4d4d4;"></div>
<div class="b" style="left:1222.3px;top:957.6px;width:12.7px;height:32.6px;background:#6fbb6a;"></div>
<div class="b" style="left:1235px;top:960.4px;width:5px;height:27.4px;background:#69a5ee;"></div>
<div class="b" style="left:1227.4px;top:1020.85px;width:4.6px;height:12.4px;background:#d4d4d4;"></div>
<div class="b" style="left:1235px;top:1013.35px;width:5px;height:27.4px;background:#69a5ee;"></div>
<div class="b" style="left:1265px;top:1073.8px;width:4.6px;height:12.4px;background:#d4d4d4;"></div>
<div class="b" style="left:1272.4px;top:1063.5px;width:8.6px;height:32.6px;background:#6fbb6a;"></div>
<svg class="b" style="left:16.2px;top:8.5px;" width="33" height="24" viewBox="0 0 33 24"><g fill="none" stroke="#d3733c" stroke-width="3.4" stroke-linejoin="miter"><path d="M10.8 1.8 H8 Q5.8 1.8 5.8 4 V8.4 Q5.8 11.8 1.8 11.8 Q5.8 11.8 5.8 15.2 V19.6 Q5.8 21.8 8 21.8 H10.8"/><path d="M21.4 1.8 H24.2 Q26.4 1.8 26.4 4 V8.4 Q26.4 11.8 30.4 11.8 Q26.4 11.8 26.4 15.2 V19.6 Q26.4 21.8 24.2 21.8 H21.4"/></g><rect x="14.2" y="6.2" width="3.8" height="3.8" fill="#d3733c"/><path d="M14.2 12.6 H18 V16 L16 19.8 H13.4 L14.8 16.4 H14.2 Z" fill="#d3733c"/></svg>
<span class="t" style="left:59.69px;top:7.91px;font-size:30px;color:#1f1f1f;transform:scaleX(0.9728);">status</span>
<span class="t" style="left:316.00px;top:7.91px;font-size:30px;color:#1f1f1f;transform:scaleX(0.9919);">200</span>
<span class="t" style="left:408.16px;top:7.91px;font-size:30px;color:#1f1f1f;transform:scaleX(1.0036);">xhr</span>
<span class="t" style="left:499.65px;top:7.91px;font-size:30px;color:#1f1f1f;transform:scaleX(0.9593);"><u>batch.js</u>...</span>
<span class="t" style="left:650.33px;top:7.91px;font-size:30px;color:#1f1f1f;transform:scaleX(0.9497);">1.4 ...</span>
<span class="t" style="left:741.77px;top:7.91px;font-size:30px;color:#1f1f1f;transform:scaleX(0.9747);">13...</span>
<svg class="b" style="left:16.2px;top:61px;" width="33" height="24" viewBox="0 0 33 24"><g fill="none" stroke="#d3733c" stroke-width="3.4" stroke-linejoin="miter"><path d="M10.8 1.8 H8 Q5.8 1.8 5.8 4 V8.4 Q5.8 11.8 1.8 11.8 Q5.8 11.8 5.8 15.2 V19.6 Q5.8 21.8 8 21.8 H10.8"/><path d="M21.4 1.8 H24.2 Q26.4 1.8 26.4 4 V8.4 Q26.4 11.8 30.4 11.8 Q26.4 11.8 26.4 15.2 V19.6 Q26.4 21.8 24.2 21.8 H21.4"/></g><rect x="14.2" y="6.2" width="3.8" height="3.8" fill="#d3733c"/><path d="M14.2 12.6 H18 V16 L16 19.8 H13.4 L14.8 16.4 H14.2 Z" fill="#d3733c"/></svg>
<span class="t" style="left:59.69px;top:60.41px;font-size:30px;color:#1f1f1f;transform:scaleX(0.9744);">subscription?val...</span>
<span class="t" style="left:316.00px;top:60.41px;font-size:30px;color:#1f1f1f;transform:scaleX(0.9919);">200</span>
<span class="t" style="left:408.16px;top:60.41px;font-size:30px;color:#1f1f1f;transform:scaleX(1.0036);">xhr</span>
<span class="t" style="left:499.65px;top:60.41px;font-size:30px;color:#1f1f1f;transform:scaleX(0.9593);"><u>batch.js</u>...</span>
<span class="t" style="left:651.43px;top:60.41px;font-size:30px;color:#1f1f1f;transform:scaleX(0.9344);">3.4 ...</span>
<span class="t" style="left:741.77px;top:60.41px;font-size:30px;color:#1f1f1f;transform:scaleX(0.9747);">14...</span>
<svg class="b" style="left:16.2px;top:113.5px;" width="33" height="24" viewBox="0 0 33 24"><g fill="none" stroke="#d3733c" stroke-width="3.4" stroke-linejoin="miter"><path d="M10.8 1.8 H8 Q5.8 1.8 5.8 4 V8.4 Q5.8 11.8 1.8 11.8 Q5.8 11.8 5.8 15.2 V19.6 Q5.8 21.8 8 21.8 H10.8"/><path d="M21.4 1.8 H24.2 Q26.4 1.8 26.4 4 V8.4 Q26.4 11.8 30.4 11.8 Q26.4 11.8 26.4 15.2 V19.6 Q26.4 21.8 24.2 21.8 H21.4"/></g><rect x="14.2" y="6.2" width="3.8" height="3.8" fill="#d3733c"/><path d="M14.2 12.6 H18 V16 L16 19.8 H13.4 L14.8 16.4 H14.2 Z" fill="#d3733c"/></svg>
<span class="t" style="left:58.65px;top:112.91px;font-size:30px;color:#1f1f1f;transform:scaleX(0.9506);">userPickerPermi...</span>
<span class="t" style="left:316.00px;top:112.91px;font-size:30px;color:#1f1f1f;transform:scaleX(0.9919);">200</span>
<span class="t" style="left:408.16px;top:112.91px;font-size:30px;color:#1f1f1f;transform:scaleX(1.0036);">xhr</span>
<span class="t" style="left:499.65px;top:112.91px;font-size:30px;color:#1f1f1f;transform:scaleX(0.9593);"><u>batch.js</u>...</span>
<span class="t" style="left:651.02px;top:112.91px;font-size:30px;color:#1f1f1f;transform:scaleX(0.9702);">69...</span>
<span class="t" style="left:741.77px;top:112.91px;font-size:30px;color:#1f1f1f;transform:scaleX(0.9747);">19...</span>
<div class="b" style="left:20px;top:178.4px;width:25px;height:1.6px;background:#dfe4f2;"></div>
<span class="t" style="left:58.50px;top:165.41px;font-size:30px;color:#1f1f1f;transform:scaleX(1.0053);">mover.svg</span>
<span class="t" style="left:316.00px;top:165.41px;font-size:30px;color:#8f8f8f;transform:scaleX(0.9919);">200</span>
<span class="t" style="left:407.72px;top:165.41px;font-size:30px;color:#1f1f1f;transform:scaleX(0.9365);">svg...</span>
<span class="t" style="left:499.65px;top:165.41px;font-size:30px;color:#1f1f1f;transform:scaleX(0.9578);"><u>batch.css</u></span>
<span class="t" style="left:650.70px;top:165.41px;font-size:30px;color:#8f8f8f;transform:scaleX(0.9657);">(m...</span>
<span class="t" style="left:748.34px;top:165.41px;font-size:30px;color:#1f1f1f;transform:scaleX(0.9879);">0 ms</span>
<svg class="b" style="left:16.2px;top:218.5px;" width="33" height="24" viewBox="0 0 33 24"><g fill="none" stroke="#d3733c" stroke-width="3.4" stroke-linejoin="miter"><path d="M10.8 1.8 H8 Q5.8 1.8 5.8 4 V8.4 Q5.8 11.8 1.8 11.8 Q5.8 11.8 5.8 15.2 V19.6 Q5.8 21.8 8 21.8 H10.8"/><path d="M21.4 1.8 H24.2 Q26.4 1.8 26.4 4 V8.4 Q26.4 11.8 30.4 11.8 Q26.4 11.8 26.4 15.2 V19.6 Q26.4 21.8 24.2 21.8 H21.4"/></g><rect x="14.2" y="6.2" width="3.8" height="3.8" fill="#d3733c"/><path d="M14.2 12.6 H18 V16 L16 19.8 H13.4 L14.8 16.4 H14.2 Z" fill="#d3733c"/></svg>
<span class="t" style="left:58.51px;top:217.91px;font-size:30px;color:#1f1f1f;transform:scaleX(1.0303);">poll?loggedIn=t...</span>
<span class="t" style="left:316.00px;top:217.91px;font-size:30px;color:#1f1f1f;transform:scaleX(0.9919);">200</span>
<span class="t" style="left:408.16px;top:217.91px;font-size:30px;color:#1f1f1f;transform:scaleX(1.0036);">xhr</span>
<span class="t" style="left:499.65px;top:217.91px;font-size:30px;color:#1f1f1f;transform:scaleX(0.9593);"><u>batch.js</u>...</span>
<span class="t" style="left:651.14px;top:217.91px;font-size:30px;color:#1f1f1f;transform:scaleX(0.9681);">94...</span>
<span class="t" style="left:741.77px;top:217.91px;font-size:30px;color:#1f1f1f;transform:scaleX(0.9747);">17...</span>
<svg class="b" style="left:16.2px;top:271px;" width="33" height="24" viewBox="0 0 33 24"><g fill="none" stroke="#d3733c" stroke-width="3.4" stroke-linejoin="miter"><path d="M10.8 1.8 H8 Q5.8 1.8 5.8 4 V8.4 Q5.8 11.8 1.8 11.8 Q5.8 11.8 5.8 15.2 V19.6 Q5.8 21.8 8 21.8 H10.8"/><path d="M21.4 1.8 H24.2 Q26.4 1.8 26.4 4 V8.4 Q26.4 11.8 30.4 11.8 Q26.4 11.8 26.4 15.2 V19.6 Q26.4 21.8 24.2 21.8 H21.4"/></g><rect x="14.2" y="6.2" width="3.8" height="3.8" fill="#d3733c"/><path d="M14.2 12.6 H18 V16 L16 19.8 H13.4 L14.8 16.4 H14.2 Z" fill="#d3733c"/></svg>
<span class="t" style="left:58.29px;top:270.41px;font-size:30px;color:#1f1f1f;transform:scaleX(0.9670);">10?valuesUpdat...</span>
<span class="t" style="left:316.00px;top:270.41px;font-size:30px;color:#1f1f1f;transform:scaleX(0.9919);">200</span>
<span class="t" style="left:408.16px;top:270.41px;font-size:30px;color:#1f1f1f;transform:scaleX(1.0036);">xhr</span>
<span class="t" style="left:499.65px;top:270.41px;font-size:30px;color:#1f1f1f;transform:scaleX(0.9593);"><u>batch.js</u>...</span>
<span class="t" style="left:650.35px;top:270.41px;font-size:30px;color:#1f1f1f;transform:scaleX(0.9401);">19....</span>
<span class="t" style="left:742.55px;top:270.41px;font-size:30px;color:#1f1f1f;transform:scaleX(0.9607);">26...</span>
<svg class="b" style="left:20px;top:323.3px;" width="25" height="25" viewBox="0 0 40 40"><rect width="40" height="40" rx="5" fill="#6555b9"/><path d="M21.2 6.2 L10.6 21.4 Q10 22.6 11.4 22.6 L18.6 22.6 L18.8 33 Q19.4 34.6 20.6 33.2 L29.6 18.6 Q30 17.4 28.8 17.4 L21.8 17.4 L21.9 7 Q21.9 5.6 21.2 6.2 Z" fill="#fff"/></svg>
<span class="t" style="left:59.27px;top:322.91px;font-size:30px;color:#1f1f1f;transform:scaleX(0.9686);">epic.svg</span>
<span class="t" style="left:316.00px;top:322.91px;font-size:30px;color:#8f8f8f;transform:scaleX(0.9919);">200</span>
<span class="t" style="left:407.72px;top:322.91px;font-size:30px;color:#1f1f1f;transform:scaleX(0.9365);">svg...</span>
<span class="t" style="left:499.65px;top:322.91px;font-size:30px;color:#1f1f1f;transform:scaleX(0.9593);"><u>batch.js</u>...</span>
<span class="t" style="left:650.70px;top:322.91px;font-size:30px;color:#8f8f8f;transform:scaleX(0.9657);">(m...</span>
<span class="t" style="left:747.20px;top:322.91px;font-size:30px;color:#1f1f1f;transform:scaleX(1.0057);">1 ms</span>
<svg class="b" style="left:22.6px;top:378.6px;" width="19.6" height="19.6" viewBox="0 0 32 32"><path d="M3 6.5 L16 13.5 L29 6.5" stroke="#5c86f7" stroke-width="5" fill="none" stroke-linecap="round" stroke-linejoin="round"/><path d="M3 18.5 L16 25.5 L29 18.5" stroke="#4865f3" stroke-width="5" fill="none" stroke-linecap="round" stroke-linejoin="round"/></svg>
<span class="t" style="left:58.52px;top:375.41px;font-size:30px;color:#1f1f1f;transform:scaleX(0.9808);">lowest.svg</span>
<span class="t" style="left:316.00px;top:375.41px;font-size:30px;color:#8f8f8f;transform:scaleX(0.9919);">200</span>
<span class="t" style="left:407.72px;top:375.41px;font-size:30px;color:#1f1f1f;transform:scaleX(0.9365);">svg...</span>
<span class="t" style="left:499.65px;top:375.41px;font-size:30px;color:#1f1f1f;transform:scaleX(0.9593);"><u>batch.js</u>...</span>
<span class="t" style="left:650.70px;top:375.41px;font-size:30px;color:#8f8f8f;transform:scaleX(0.9657);">(m...</span>
<span class="t" style="left:748.34px;top:375.41px;font-size:30px;color:#1f1f1f;transform:scaleX(0.9879);">0 ms</span>
<svg class="b" style="left:19.5px;top:427.9px;" width="26" height="26" viewBox="0 0 26 26"><circle cx="13" cy="13" r="12.8" fill="#6554b6"/><path d="M5.5 12 Q13 4 20.5 12 L20.5 14 H5.5 Z" fill="#2d2a55"/><path d="M7 13.5 H19 V18 Q13 25.5 7 18 Z" fill="#f1d2b6"/><path d="M8 19 Q13 26 18 19 L18 22 Q13 27 8 22 Z" fill="#fff"/><circle cx="10.6" cy="15.6" r="1.2" fill="#2d2a55"/><circle cx="15.6" cy="15.6" r="1.2" fill="#2d2a55"/></svg>
<span class="t" style="left:58.64px;top:427.91px;font-size:30px;color:#1f1f1f;transform:scaleX(0.9535);">useravatar?avat...</span>
<span class="t" style="left:316.00px;top:427.91px;font-size:30px;color:#8f8f8f;transform:scaleX(0.9919);">200</span>
<span class="t" style="left:407.72px;top:427.91px;font-size:30px;color:#1f1f1f;transform:scaleX(0.9365);">svg...</span>
<span class="t" style="left:499.65px;top:427.91px;font-size:30px;color:#1f1f1f;transform:scaleX(0.9593);"><u>batch.js</u>...</span>
<span class="t" style="left:650.70px;top:427.91px;font-size:30px;color:#8f8f8f;transform:scaleX(0.9657);">(m...</span>
<span class="t" style="left:747.20px;top:427.91px;font-size:30px;color:#1f1f1f;transform:scaleX(1.0057);">1 ms</span>
<svg class="b" style="left:22.6px;top:483.6px;" width="19.6" height="19.6" viewBox="0 0 32 32"><path d="M3 8.2 H29 M3 23.8 H29" stroke="#e8ab3a" stroke-width="5.4" fill="none" stroke-linecap="round"/></svg>
<span class="t" style="left:58.50px;top:480.41px;font-size:30px;color:#1f1f1f;transform:scaleX(1.0045);">medium.svg</span>
<span class="t" style="left:316.00px;top:480.41px;font-size:30px;color:#8f8f8f;transform:scaleX(0.9919);">200</span>
<span class="t" style="left:407.72px;top:480.41px;font-size:30px;color:#1f1f1f;transform:scaleX(0.9365);">svg...</span>
<span class="t" style="left:499.65px;top:480.41px;font-size:30px;color:#1f1f1f;transform:scaleX(0.9593);"><u>batch.js</u>...</span>
<span class="t" style="left:650.70px;top:480.41px;font-size:30px;color:#8f8f8f;transform:scaleX(0.9657);">(m...</span>
<span class="t" style="left:747.20px;top:480.41px;font-size:30px;color:#1f1f1f;transform:scaleX(1.0057);">1 ms</span>
<svg class="b" style="left:19.5px;top:532.9px;" width="26" height="26" viewBox="0 0 26 26"><circle cx="13" cy="13" r="12.8" fill="#56a0c8"/><circle cx="13" cy="13.5" r="8.2" fill="#e9a94b"/><circle cx="10" cy="12" r="2.2" fill="#fff"/><circle cx="16" cy="12" r="2.2" fill="#fff"/><circle cx="10" cy="12" r="1" fill="#444"/><circle cx="16" cy="12" r="1" fill="#444"/><path d="M11 18 H15 L13 20.5 Z" fill="#c8553a"/></svg>
<span class="t" style="left:58.64px;top:532.91px;font-size:30px;color:#1f1f1f;transform:scaleX(0.9535);">useravatar?avat...</span>
<span class="t" style="left:316.00px;top:532.91px;font-size:30px;color:#8f8f8f;transform:scaleX(0.9919);">200</span>
<span class="t" style="left:407.72px;top:532.91px;font-size:30px;color:#1f1f1f;transform:scaleX(0.9365);">svg...</span>
<span class="t" style="left:499.65px;top:532.91px;font-size:30px;color:#1f1f1f;transform:scaleX(0.9593);"><u>batch.js</u>...</span>
<span class="t" style="left:650.70px;top:532.91px;font-size:30px;color:#8f8f8f;transform:scaleX(0.9657);">(m...</span>
<span class="t" style="left:747.20px;top:532.91px;font-size:30px;color:#1f1f1f;transform:scaleX(1.0057);">1 ms</span>
<svg class="b" style="left:22.6px;top:588.6px;" width="19.6" height="19.6" viewBox="0 0 32 32"><path d="M3 13.5 L16 6.5 L29 13.5" stroke="#da5b3b" stroke-width="5" fill="none" stroke-linecap="round" stroke-linejoin="round"/><path d="M3 25.5 L16 18.5 L29 25.5" stroke="#e17957" stroke-width="5" fill="none" stroke-linecap="round" stroke-linejoin="round"/></svg>
<span class="t" style="left:58.44px;top:585.41px;font-size:30px;color:#1f1f1f;transform:scaleX(0.9915);">highest.svg</span>
<span class="t" style="left:316.00px;top:585.41px;font-size:30px;color:#8f8f8f;transform:scaleX(0.9919);">200</span>
<span class="t" style="left:407.72px;top:585.41px;font-size:30px;color:#1f1f1f;transform:scaleX(0.9365);">svg...</span>
<span class="t" style="left:499.65px;top:585.41px;font-size:30px;color:#1f1f1f;transform:scaleX(0.9593);"><u>batch.js</u>...</span>
<span class="t" style="left:650.70px;top:585.41px;font-size:30px;color:#8f8f8f;transform:scaleX(0.9657);">(m...</span>
<span class="t" style="left:747.20px;top:585.41px;font-size:30px;color:#1f1f1f;transform:scaleX(1.0057);">1 ms</span>
<svg class="b" style="left:22.6px;top:641.1px;" width="19.6" height="19.6" viewBox="0 0 32 32"><path d="M3 13.2 L16 20.7 L29 13.2" stroke="#4256ef" stroke-width="5" fill="none" stroke-linecap="round" stroke-linejoin="round"/></svg>
<span class="t" style="left:58.46px;top:637.91px;font-size:30px;color:#1f1f1f;transform:scaleX(1.0113);">low.svg</span>
<span class="t" style="left:316.00px;top:637.91px;font-size:30px;color:#8f8f8f;transform:scaleX(0.9919);">200</span>
<span class="t" style="left:407.72px;top:637.91px;font-size:30px;color:#1f1f1f;transform:scaleX(0.9365);">svg...</span>
<span class="t" style="left:499.65px;top:637.91px;font-size:30px;color:#1f1f1f;transform:scaleX(0.9593);"><u>batch.js</u>...</span>
<span class="t" style="left:650.70px;top:637.91px;font-size:30px;color:#8f8f8f;transform:scaleX(0.9657);">(m...</span>
<span class="t" style="left:748.34px;top:637.91px;font-size:30px;color:#1f1f1f;transform:scaleX(0.9879);">0 ms</span>
<svg class="b" style="left:20px;top:690.8px;" width="25" height="25" viewBox="0 0 40 40"><rect width="40" height="40" rx="5" fill="#6bb082"/><path d="M12.5 9 H27.5 Q29 9 29 10.5 V31.5 L20 23 L11 31.5 V10.5 Q11 9 12.5 9 Z" fill="#fff"/></svg>
<span class="t" style="left:59.67px;top:690.41px;font-size:30px;color:#1f1f1f;transform:scaleX(0.9909);">story.svg</span>
<span class="t" style="left:316.00px;top:690.41px;font-size:30px;color:#8f8f8f;transform:scaleX(0.9919);">200</span>
<span class="t" style="left:407.72px;top:690.41px;font-size:30px;color:#1f1f1f;transform:scaleX(0.9365);">svg...</span>
<span class="t" style="left:499.65px;top:690.41px;font-size:30px;color:#1f1f1f;transform:scaleX(0.9593);"><u>batch.js</u>...</span>
<span class="t" style="left:650.70px;top:690.41px;font-size:30px;color:#8f8f8f;transform:scaleX(0.9657);">(m...</span>
<span class="t" style="left:748.34px;top:690.41px;font-size:30px;color:#1f1f1f;transform:scaleX(0.9879);">0 ms</span>
<svg class="b" style="left:20px;top:743.3px;" width="25" height="25" viewBox="0 0 40 40"><rect width="40" height="40" rx="5" fill="#dc5f3c"/><circle cx="20" cy="20" r="10" fill="#fff"/></svg>
<span class="t" style="left:60.40px;top:742.91px;font-size:30px;color:#1f1f1f;transform:scaleX(0.9444);">viewavatar?size...</span>
<span class="t" style="left:316.00px;top:742.91px;font-size:30px;color:#8f8f8f;transform:scaleX(0.9919);">200</span>
<span class="t" style="left:407.72px;top:742.91px;font-size:30px;color:#1f1f1f;transform:scaleX(0.9365);">svg...</span>
<span class="t" style="left:499.65px;top:742.91px;font-size:30px;color:#1f1f1f;transform:scaleX(0.9593);"><u>batch.js</u>...</span>
<span class="t" style="left:650.70px;top:742.91px;font-size:30px;color:#8f8f8f;transform:scaleX(0.9657);">(m...</span>
<span class="t" style="left:748.34px;top:742.91px;font-size:30px;color:#1f1f1f;transform:scaleX(0.9879);">0 ms</span>
<svg class="b" style="left:20px;top:795.8px;" width="25" height="25" viewBox="0 0 25 25"><rect width="25" height="25" rx="3" fill="#4c78f0"/><path d="M5.6 12.8 L10.4 17.4 L19.6 7.6" fill="none" stroke="#fff" stroke-width="3"/></svg>
<span class="t" style="left:60.40px;top:795.41px;font-size:30px;color:#1f1f1f;transform:scaleX(0.9444);">viewavatar?size...</span>
<span class="t" style="left:316.00px;top:795.41px;font-size:30px;color:#8f8f8f;transform:scaleX(0.9919);">200</span>
<span class="t" style="left:407.72px;top:795.41px;font-size:30px;color:#1f1f1f;transform:scaleX(0.9365);">svg...</span>
<span class="t" style="left:499.65px;top:795.41px;font-size:30px;color:#1f1f1f;transform:scaleX(0.9593);"><u>batch.js</u>...</span>
<span class="t" style="left:650.70px;top:795.41px;font-size:30px;color:#8f8f8f;transform:scaleX(0.9657);">(m...</span>
<span class="t" style="left:748.34px;top:795.41px;font-size:30px;color:#1f1f1f;transform:scaleX(0.9879);">0 ms</span>
<svg class="b" style="left:22.6px;top:851.1px;" width="19.6" height="19.6" viewBox="0 0 32 32"><path d="M3 18.8 L16 11.3 L29 18.8" stroke="#e0583a" stroke-width="5" fill="none" stroke-linecap="round" stroke-linejoin="round"/></svg>
<span class="t" style="left:58.42px;top:847.91px;font-size:30px;color:#1f1f1f;transform:scaleX(0.9978);">high.svg</span>
<span class="t" style="left:316.00px;top:847.91px;font-size:30px;color:#8f8f8f;transform:scaleX(0.9919);">200</span>
<span class="t" style="left:407.72px;top:847.91px;font-size:30px;color:#1f1f1f;transform:scaleX(0.9365);">svg...</span>
<span class="t" style="left:499.65px;top:847.91px;font-size:30px;color:#1f1f1f;transform:scaleX(0.9593);"><u>batch.js</u>...</span>
<span class="t" style="left:650.70px;top:847.91px;font-size:30px;color:#8f8f8f;transform:scaleX(0.9657);">(m...</span>
<span class="t" style="left:748.34px;top:847.91px;font-size:30px;color:#1f1f1f;transform:scaleX(0.9879);">0 ms</span>
<svg class="b" style="left:16.2px;top:901px;" width="33" height="24" viewBox="0 0 33 24"><g fill="none" stroke="#d3733c" stroke-width="3.4" stroke-linejoin="miter"><path d="M10.8 1.8 H8 Q5.8 1.8 5.8 4 V8.4 Q5.8 11.8 1.8 11.8 Q5.8 11.8 5.8 15.2 V19.6 Q5.8 21.8 8 21.8 H10.8"/><path d="M21.4 1.8 H24.2 Q26.4 1.8 26.4 4 V8.4 Q26.4 11.8 30.4 11.8 Q26.4 11.8 26.4 15.2 V19.6 Q26.4 21.8 24.2 21.8 H21.4"/></g><rect x="14.2" y="6.2" width="3.8" height="3.8" fill="#d3733c"/><path d="M14.2 12.6 H18 V16 L16 19.8 H13.4 L14.8 16.4 H14.2 Z" fill="#d3733c"/></svg>
<span class="t" style="left:59.26px;top:900.41px;font-size:30px;color:#1f1f1f;transform:scaleX(0.9832);">generatorDescri...</span>
<span class="t" style="left:316.00px;top:900.41px;font-size:30px;color:#1f1f1f;transform:scaleX(0.9919);">200</span>
<span class="t" style="left:408.16px;top:900.41px;font-size:30px;color:#1f1f1f;transform:scaleX(1.0036);">xhr</span>
<span class="t" style="left:499.65px;top:900.41px;font-size:30px;color:#1f1f1f;transform:scaleX(0.9593);"><u>batch.js</u>...</span>
<span class="t" style="left:651.14px;top:900.41px;font-size:30px;color:#1f1f1f;transform:scaleX(0.9681);">92...</span>
<span class="t" style="left:741.77px;top:900.41px;font-size:30px;color:#1f1f1f;transform:scaleX(0.9747);">18...</span>
<svg class="b" style="left:16.2px;top:953.5px;" width="33" height="24" viewBox="0 0 33 24"><g fill="none" stroke="#d3733c" stroke-width="3.4" stroke-linejoin="miter"><path d="M10.8 1.8 H8 Q5.8 1.8 5.8 4 V8.4 Q5.8 11.8 1.8 11.8 Q5.8 11.8 5.8 15.2 V19.6 Q5.8 21.8 8 21.8 H10.8"/><path d="M21.4 1.8 H24.2 Q26.4 1.8 26.4 4 V8.4 Q26.4 11.8 30.4 11.8 Q26.4 11.8 26.4 15.2 V19.6 Q26.4 21.8 24.2 21.8 H21.4"/></g><rect x="14.2" y="6.2" width="3.8" height="3.8" fill="#d3733c"/><path d="M14.2 12.6 H18 V16 L16 19.8 H13.4 L14.8 16.4 H14.2 Z" fill="#d3733c"/></svg>
<span class="t" style="left:58.57px;top:952.91px;font-size:30px;color:#1f1f1f;transform:scaleX(0.9678);">resources</span>
<span class="t" style="left:316.00px;top:952.91px;font-size:30px;color:#1f1f1f;transform:scaleX(0.9919);">200</span>
<span class="t" style="left:408.06px;top:952.91px;font-size:30px;color:#1f1f1f;transform:scaleX(1.0451);">fetch</span>
<span class="t" style="left:499.65px;top:952.91px;font-size:30px;color:#1f1f1f;transform:scaleX(0.9593);"><u>batch.js</u>...</span>
<span class="t" style="left:651.14px;top:952.91px;font-size:30px;color:#1f1f1f;transform:scaleX(0.9681);">93...</span>
<span class="t" style="left:742.55px;top:952.91px;font-size:30px;color:#1f1f1f;transform:scaleX(0.9607);">24...</span>
<svg class="b" style="left:16.6px;top:1003.2px;" width="29" height="29" viewBox="0 0 30 30"><rect x="2" y="2" width="26" height="26" rx="2.4" fill="none" stroke="#d3733c" stroke-width="3"/><path d="M12.4 10 L7.6 15 L12.4 20 M17.6 10 L22.4 15 L17.6 20" fill="none" stroke="#d3733c" stroke-width="2.8"/></svg>
<span class="t" style="left:58.60px;top:1005.41px;font-size:30px;color:#1f1f1f;transform:scaleX(0.9813);">batch.js</span>
<span class="t" style="left:316.00px;top:1005.41px;font-size:30px;color:#8f8f8f;transform:scaleX(0.9919);">200</span>
<span class="t" style="left:407.70px;top:1005.41px;font-size:30px;color:#1f1f1f;transform:scaleX(0.9619);">scri...</span>
<span class="t" style="left:499.65px;top:1005.41px;font-size:30px;color:#1f1f1f;transform:scaleX(0.9593);"><u>batch.js</u>...</span>
<span class="t" style="left:650.70px;top:1005.41px;font-size:30px;color:#8f8f8f;transform:scaleX(0.9671);">(dis...</span>
<span class="t" style="left:748.00px;top:1005.41px;font-size:30px;color:#1f1f1f;transform:scaleX(0.9932);">2 ms</span>
<svg class="b" style="left:16.2px;top:1058.5px;" width="33" height="24" viewBox="0 0 33 24"><g fill="none" stroke="#d3733c" stroke-width="3.4" stroke-linejoin="miter"><path d="M10.8 1.8 H8 Q5.8 1.8 5.8 4 V8.4 Q5.8 11.8 1.8 11.8 Q5.8 11.8 5.8 15.2 V19.6 Q5.8 21.8 8 21.8 H10.8"/><path d="M21.4 1.8 H24.2 Q26.4 1.8 26.4 4 V8.4 Q26.4 11.8 30.4 11.8 Q26.4 11.8 26.4 15.2 V19.6 Q26.4 21.8 24.2 21.8 H21.4"/></g><rect x="14.2" y="6.2" width="3.8" height="3.8" fill="#d3733c"/><path d="M14.2 12.6 H18 V16 L16 19.8 H13.4 L14.8 16.4 H14.2 Z" fill="#d3733c"/></svg>
<span class="t" style="left:58.49px;top:1057.91px;font-size:30px;color:#1f1f1f;transform:scaleX(1.0384);">bulk</span>
<span class="t" style="left:316.00px;top:1057.91px;font-size:30px;color:#1f1f1f;transform:scaleX(0.9919);">200</span>
<span class="t" style="left:408.06px;top:1057.91px;font-size:30px;color:#1f1f1f;transform:scaleX(1.0451);">fetch</span>
<span class="t" style="left:499.65px;top:1057.91px;font-size:30px;color:#1f1f1f;transform:scaleX(0.9593);"><u>batch.js</u>...</span>
<span class="t" style="left:651.02px;top:1057.91px;font-size:30px;color:#1f1f1f;transform:scaleX(0.9702);">65...</span>
<span class="t" style="left:741.77px;top:1057.91px;font-size:30px;color:#1f1f1f;transform:scaleX(0.9747);">19...</span>
</div>
<div class="b" style="left:1707.8px;top:688.8px;width:2.6px;height:1164.5px;background:#d3dffa;"></div>
<div class="b" style="left:1799.8px;top:688.8px;width:2.6px;height:1164.5px;background:#d3dffa;"></div>
<div class="b" style="left:1890.8px;top:688.8px;width:2.6px;height:1164.5px;background:#d3dffa;"></div>
<div class="b" style="left:2042.8px;top:688.8px;width:2.6px;height:1164.5px;background:#d3dffa;"></div>
<div class="b" style="left:2133.8px;top:688.8px;width:2.6px;height:1164.5px;background:#d3dffa;"></div>
<div class="b" style="left:2225.8px;top:688.8px;width:2.6px;height:1164.5px;background:#d3dffa;"></div>
<div class="b" style="left:1403px;top:754.6px;width:1320px;height:2.4px;background:#d5e0fa;"></div>
<div class="b" style="left:2684px;top:757px;width:39px;height:1096px;background:#f1f1f1;"></div>
<svg class="b" style="left:2694.5px;top:772.5px;" width="21" height="13" viewBox="0 0 21 13"><path d="M10.5 1 L20.7 11.6 H0.3 Z" fill="#505050"/></svg>
<div class="b" style="left:2686.3px;top:1631.3px;width:36.7px;height:178.5px;background:#c1c1c1;"></div>
<svg class="b" style="left:2694.5px;top:1825px;" width="21" height="13" viewBox="0 0 21 13"><path d="M10.5 11.8 L20.7 1.2 H0.3 Z" fill="#a3a3a3"/></svg>
<div class="b" style="left:1403px;top:1852.6px;width:1320px;height:2.6px;background:#d5e0fa;"></div>
<div class="b" style="left:1403px;top:1855.2px;width:1320px;height:63.8px;background:#fff;"></div>
<span class="t" style="left:1429.73px;top:1873.61px;font-size:30px;color:#474747;transform:scaleX(0.9919);">117 requests</span>
<div class="b" style="left:1621px;top:1868px;width:3px;height:41px;background:#d5e0fa;"></div>
<span class="t" style="left:1645.73px;top:1873.61px;font-size:30px;color:#474747;transform:scaleX(0.9766);">80.2 kB transferred</span>
<div class="b" style="left:1917px;top:1868px;width:3px;height:41px;background:#d5e0fa;"></div>
<span class="t" style="left:1941.54px;top:1873.61px;font-size:30px;color:#474747;transform:scaleX(0.9691);">20.2 MB resources</span>
<div class="b" style="left:2206.5px;top:1868px;width:3px;height:41px;background:#d5e0fa;"></div>
<span class="t" style="left:2230.69px;top:1873.61px;font-size:30px;color:#474747;transform:scaleX(0.9407);">Finish: 8.58 s</span>
<div class="b" style="left:2420.5px;top:1868px;width:3px;height:41px;background:#d5e0fa;"></div>
<span class="t" style="left:2445.04px;top:1873.11px;font-size:30px;color:#24399f;">DOMContentLoaded</span>
<svg class="b" style="left:2701px;top:1897px;" width="22" height="22" viewBox="0 0 22 22"><path d="M22 0 V22 H0 A22 22 0 0 0 22 0 Z" fill="#3b4256"/></svg>
<div class="b" style="left:1403px;top:219.5px;width:2px;height:1699.5px;background:#dae4fb;"></div>
</body></html>
